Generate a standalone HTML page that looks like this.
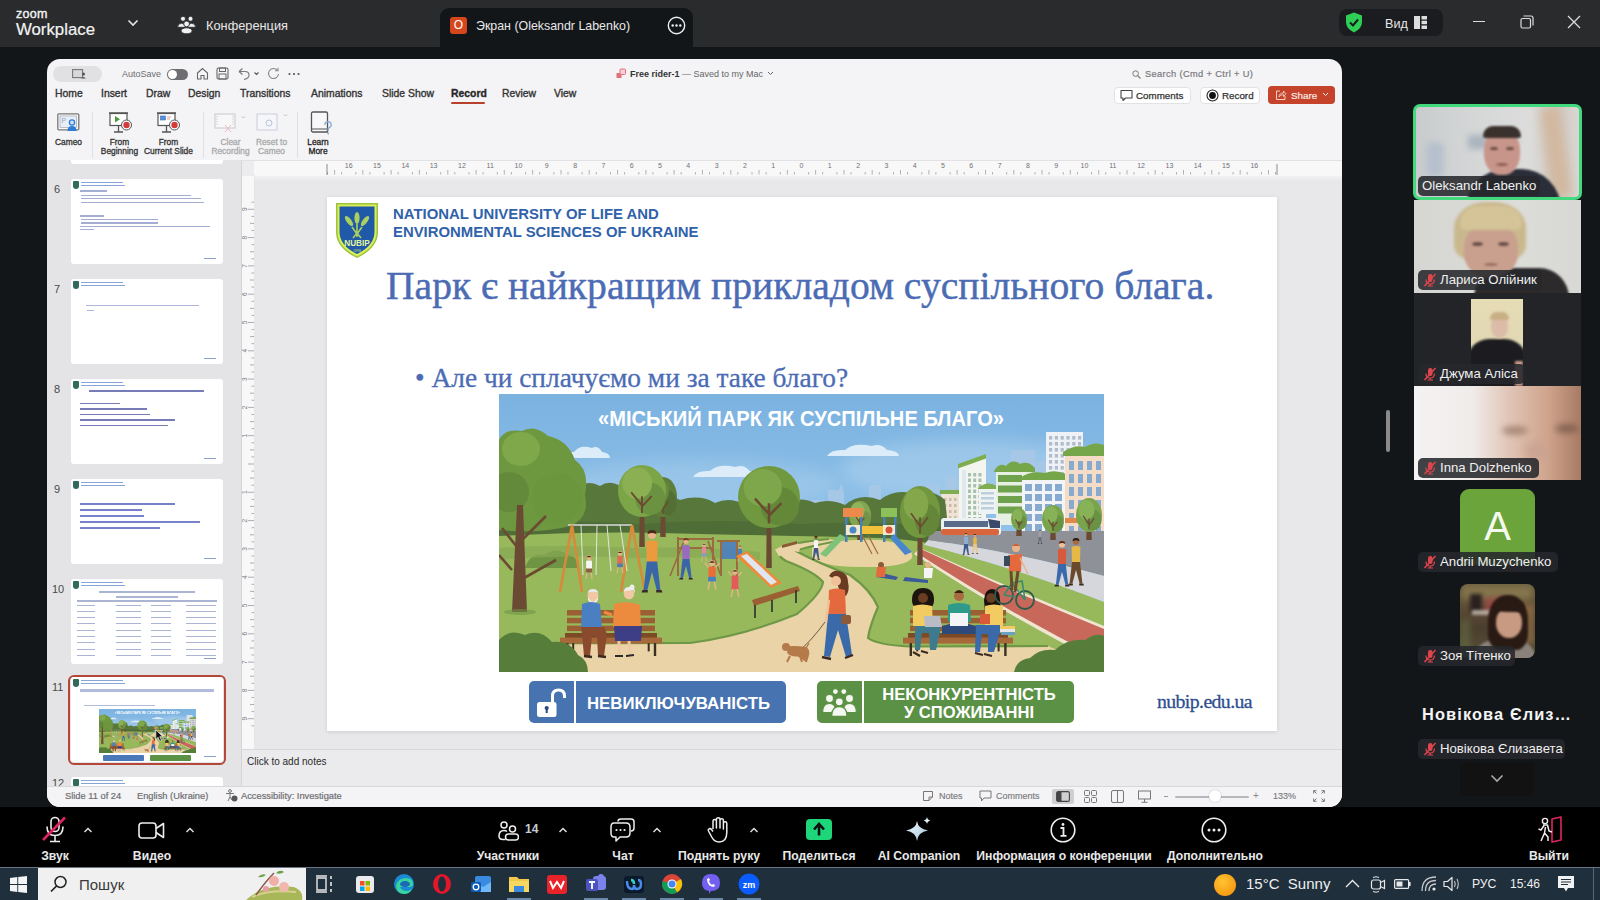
<!DOCTYPE html>
<html><head><meta charset="utf-8">
<style>
*{margin:0;padding:0;box-sizing:border-box}
html,body{width:1600px;height:900px;overflow:hidden;background:#131619;font-family:"Liberation Sans",sans-serif}
.a{position:absolute}
#topbar{left:0;top:0;width:1600px;height:47px;background:#2a2b2d}
#main{left:0;top:47px;width:1600px;height:760px;background:#131619}
#ppt{left:47px;top:59px;width:1295px;height:748px;background:#f4f4f6;border-radius:13px;overflow:hidden}
#toolbar{left:0;top:807px;width:1600px;height:60px;background:#000}
#taskbar{left:0;top:867px;width:1600px;height:33px;background:#1f2f3c}
.w{color:#fff}
.pt{white-space:nowrap;line-height:11px}
.tab{top:88px;font-size:10.4px;color:#333;line-height:12px;-webkit-text-stroke:0.35px #333}
.rb{font-size:8.4px;color:#333;text-align:center;line-height:9px;-webkit-text-stroke:0.3px currentColor}
</style></head><body>
<div id="topbar" class="a">
  <div class="a" style="left:16px;top:8px;color:#f2f2f2;font-size:12.5px;letter-spacing:0.3px;line-height:12px;-webkit-text-stroke:0.4px #f2f2f2">zoom</div>
  <div class="a" style="left:16px;top:20px;color:#f2f2f2;font-size:16.8px;line-height:20px;-webkit-text-stroke:0.2px #f2f2f2">Workplace</div>
  <svg class="a" style="left:127px;top:19px" width="12" height="8" viewBox="0 0 12 8"><path d="M1.5 1.5 L6 6 L10.5 1.5" stroke="#e6e6e6" stroke-width="1.6" fill="none"/></svg>
  <svg class="a" style="left:177px;top:15px" width="20" height="20" viewBox="0 0 20 20"><g fill="#f2f2f2" stroke="#2a2b2d" stroke-width="0.9"><circle cx="6" cy="3.8" r="2.5"/><circle cx="13.5" cy="3.8" r="2.5"/><path d="M0.6 12.3 Q0.6 8.3 4.6 8.3 Q8.6 8.3 8.6 12.3Z"/><path d="M10.6 12.3 Q10.6 8.3 14.6 8.3 Q18.6 8.3 18.6 12.3Z"/><circle cx="9.6" cy="8.9" r="2.9"/><ellipse cx="9.6" cy="15.8" rx="5.6" ry="3"/></g></svg>
  <div class="a" style="left:206px;top:18px;color:#e8e8e8;font-size:12.8px;line-height:16px">Конференция</div>
  <div class="a" style="left:440px;top:8px;width:253px;height:39px;background:#131619;border-radius:9px 9px 0 0"></div>
  <div class="a" style="left:450px;top:17px;width:17px;height:17px;background:#d6461c;border-radius:3px;color:#fff;font-size:12px;text-align:center;line-height:17px">O</div>
  <div class="a" style="left:476px;top:18px;color:#e8e8e8;font-size:12.4px;line-height:16px">Экран (Oleksandr Labenko)</div>
  <svg class="a" style="left:667px;top:16px" width="19" height="19" viewBox="0 0 19 19"><circle cx="9.5" cy="9.5" r="8.2" stroke="#eee" stroke-width="1.4" fill="none"/><circle cx="5.7" cy="9.5" r="1.2" fill="#eee"/><circle cx="9.5" cy="9.5" r="1.2" fill="#eee"/><circle cx="13.3" cy="9.5" r="1.2" fill="#eee"/></svg>
  <div class="a" style="left:1339px;top:9px;width:104px;height:27px;background:#1b1c1f;border-radius:8px"></div>
  <svg class="a" style="left:1345px;top:12px" width="18" height="21" viewBox="0 0 18 21"><path d="M9 0.5 L17 3.5 L17 10 Q17 16.5 9 20.5 Q1 16.5 1 10 L1 3.5Z" fill="#2fcf55"/><path d="M5 10.5 L8 13.5 L13 7.5" stroke="#1b1c1f" stroke-width="2" fill="none"/></svg>
  <div class="a" style="left:1385px;top:16px;color:#e8e8e8;font-size:12.6px;line-height:16px">Вид</div>
  <svg class="a" style="left:1414px;top:16px" width="13" height="13" viewBox="0 0 13 13"><rect x="0" y="0" width="6" height="13" fill="#ddd"/><rect x="7.5" y="0" width="5.5" height="3.5" fill="#ddd"/><rect x="7.5" y="4.7" width="5.5" height="3.5" fill="#ddd"/><rect x="7.5" y="9.5" width="5.5" height="3.5" fill="#ddd"/></svg>
  <div class="a" style="left:1473px;top:21px;width:12px;height:1.3px;background:#ddd"></div>
  <svg class="a" style="left:1520px;top:15px" width="14" height="14" viewBox="0 0 14 14"><rect x="1" y="3.5" width="9.5" height="9.5" rx="1.5" stroke="#ddd" stroke-width="1.2" fill="none"/><path d="M3.5 1 L11 1 Q13 1 13 3 L13 10.5" stroke="#ddd" stroke-width="1.2" fill="none"/></svg>
  <svg class="a" style="left:1567px;top:15px" width="14" height="14" viewBox="0 0 14 14"><path d="M1 1 L13 13 M13 1 L1 13" stroke="#ddd" stroke-width="1.3"/></svg>
</div>
<div id="main" class="a"></div>
<div id="ppt" class="a"><div class="a" style="left:-47px;top:-59px;width:1600px;height:900px">
  <div class="a" style="left:47px;top:160px;width:194px;height:626px;background:#e4e4e6"></div>
  <div class="a" style="left:241px;top:160px;width:1px;height:626px;background:#d4d4d6"></div>
  <div class="a" style="left:47px;top:160px;width:194px;height:626px;overflow:hidden"><div class="a" style="left:-47px;top:-160px;width:300px;height:1000px"><div class="a" style="left:71px;top:120px;width:152px;height:44px;background:#fff;border-radius:3px"></div><div class="a pt" style="left:54px;top:183px;font-size:11px;line-height:13px;color:#4a4a4a">6</div><div class="a" style="left:71px;top:179px;width:152px;height:85px;background:#fff;border-radius:3px;overflow:hidden"><div class="a" style="left:2px;top:1.5px;width:6px;height:8px;background:#2f6a5c;border-radius:1px 1px 3px 3px"></div><div class="a" style="left:10px;top:2.5px;width:42px;height:1.5px;background:#6a8ed0;opacity:0.8"></div><div class="a" style="left:10px;top:5.5px;width:44px;height:1.5px;background:#6a8ed0;opacity:0.8"></div><div class="a" style="left:133px;top:79px;width:12px;height:1.4px;background:#8aa0d0"></div><div class="a" style="left:9px;top:11.2px;width:27px;height:1.4px;background:#5a6ab0;opacity:0.55"></div><div class="a" style="left:10px;top:16px;width:110px;height:1.2px;background:#5a6ab0;opacity:0.55"></div><div class="a" style="left:10px;top:19.2px;width:120px;height:1.2px;background:#5a6ab0;opacity:0.55"></div><div class="a" style="left:10px;top:22.6px;width:123px;height:1.2px;background:#5a6ab0;opacity:0.55"></div><div class="a" style="left:9px;top:36.4px;width:24px;height:1.4px;background:#5a6ab0;opacity:0.55"></div><div class="a" style="left:10px;top:40px;width:77px;height:1.2px;background:#5a6ab0;opacity:0.55"></div><div class="a" style="left:10px;top:43.4px;width:77px;height:1.2px;background:#5a6ab0;opacity:0.55"></div><div class="a" style="left:9px;top:47px;width:130px;height:1.2px;background:#5a6ab0;opacity:0.55"></div><div class="a" style="left:9px;top:50.2px;width:14px;height:1.2px;background:#5a6ab0;opacity:0.55"></div></div><div class="a pt" style="left:54px;top:283px;font-size:11px;line-height:13px;color:#4a4a4a">7</div><div class="a" style="left:71px;top:279px;width:152px;height:85px;background:#fff;border-radius:3px;overflow:hidden"><div class="a" style="left:2px;top:1.5px;width:6px;height:8px;background:#2f6a5c;border-radius:1px 1px 3px 3px"></div><div class="a" style="left:10px;top:2.5px;width:42px;height:1.5px;background:#6a8ed0;opacity:0.8"></div><div class="a" style="left:10px;top:5.5px;width:44px;height:1.5px;background:#6a8ed0;opacity:0.8"></div><div class="a" style="left:133px;top:79px;width:12px;height:1.4px;background:#8aa0d0"></div><div class="a" style="left:15px;top:26px;width:113px;height:1.4px;background:#7078c0;opacity:0.55"></div><div class="a" style="left:16px;top:30.5px;width:7px;height:1.2px;background:#7078c0;opacity:0.55"></div></div><div class="a pt" style="left:54px;top:383px;font-size:11px;line-height:13px;color:#4a4a4a">8</div><div class="a" style="left:71px;top:379px;width:152px;height:85px;background:#fff;border-radius:3px;overflow:hidden"><div class="a" style="left:2px;top:1.5px;width:6px;height:8px;background:#2f6a5c;border-radius:1px 1px 3px 3px"></div><div class="a" style="left:10px;top:2.5px;width:42px;height:1.5px;background:#6a8ed0;opacity:0.8"></div><div class="a" style="left:10px;top:5.5px;width:44px;height:1.5px;background:#6a8ed0;opacity:0.8"></div><div class="a" style="left:133px;top:79px;width:12px;height:1.4px;background:#8aa0d0"></div><div class="a" style="left:18px;top:11px;width:115px;height:2.2px;background:#4a50a0;opacity:0.75"></div><div class="a" style="left:9.3px;top:23.5px;width:40px;height:1.5px;background:#4a50a0;opacity:0.75"></div><div class="a" style="left:9.3px;top:29px;width:67px;height:1.5px;background:#4a50a0;opacity:0.75"></div><div class="a" style="left:9.3px;top:34.5px;width:70px;height:1.5px;background:#4a50a0;opacity:0.75"></div><div class="a" style="left:9.3px;top:40px;width:95px;height:1.5px;background:#4a50a0;opacity:0.75"></div><div class="a" style="left:9.3px;top:45.5px;width:88px;height:1.5px;background:#4a50a0;opacity:0.75"></div></div><div class="a pt" style="left:54px;top:483px;font-size:11px;line-height:13px;color:#4a4a4a">9</div><div class="a" style="left:71px;top:479px;width:152px;height:85px;background:#fff;border-radius:3px;overflow:hidden"><div class="a" style="left:2px;top:1.5px;width:6px;height:8px;background:#2f6a5c;border-radius:1px 1px 3px 3px"></div><div class="a" style="left:10px;top:2.5px;width:42px;height:1.5px;background:#6a8ed0;opacity:0.8"></div><div class="a" style="left:10px;top:5.5px;width:44px;height:1.5px;background:#6a8ed0;opacity:0.8"></div><div class="a" style="left:133px;top:79px;width:12px;height:1.4px;background:#8aa0d0"></div><div class="a" style="left:8.7px;top:24px;width:95px;height:1.5px;background:#4a58b8;opacity:0.75"></div><div class="a" style="left:8.7px;top:30px;width:62px;height:1.5px;background:#4a58b8;opacity:0.75"></div><div class="a" style="left:8.7px;top:36px;width:64px;height:1.5px;background:#4a58b8;opacity:0.75"></div><div class="a" style="left:8.7px;top:42px;width:120px;height:1.5px;background:#4a58b8;opacity:0.75"></div><div class="a" style="left:8.7px;top:48px;width:80px;height:1.5px;background:#4a58b8;opacity:0.75"></div></div><div class="a pt" style="left:52px;top:583px;font-size:11px;line-height:13px;color:#4a4a4a">10</div><div class="a" style="left:71px;top:579px;width:152px;height:85px;background:#fff;border-radius:3px;overflow:hidden"><div class="a" style="left:2px;top:1.5px;width:6px;height:8px;background:#2f6a5c;border-radius:1px 1px 3px 3px"></div><div class="a" style="left:10px;top:2.5px;width:42px;height:1.5px;background:#6a8ed0;opacity:0.8"></div><div class="a" style="left:10px;top:5.5px;width:44px;height:1.5px;background:#6a8ed0;opacity:0.8"></div><div class="a" style="left:133px;top:79px;width:12px;height:1.4px;background:#8aa0d0"></div><div class="a" style="left:28px;top:12px;width:96px;height:2.2px;background:#5a6aa8;opacity:0.5"></div><div class="a" style="left:45px;top:16.5px;width:62px;height:2.2px;background:#5a6aa8;opacity:0.5"></div><div class="a" style="left:6px;top:21px;width:140px;height:1.6px;background:#5a6aa8;opacity:0.5"></div><div class="a" style="left:6px;top:25.5px;width:18px;height:1.1px;background:#5a6aa8;opacity:0.5"></div><div class="a" style="left:45px;top:25.5px;width:25px;height:1.1px;background:#5a6aa8;opacity:0.5"></div><div class="a" style="left:80px;top:25.5px;width:20px;height:1.1px;background:#5a6aa8;opacity:0.5"></div><div class="a" style="left:115px;top:25.5px;width:30px;height:1.1px;background:#5a6aa8;opacity:0.5"></div><div class="a" style="left:6px;top:31.8px;width:18px;height:1.1px;background:#5a6aa8;opacity:0.5"></div><div class="a" style="left:45px;top:31.8px;width:25px;height:1.1px;background:#5a6aa8;opacity:0.5"></div><div class="a" style="left:80px;top:31.8px;width:20px;height:1.1px;background:#5a6aa8;opacity:0.5"></div><div class="a" style="left:115px;top:31.8px;width:30px;height:1.1px;background:#5a6aa8;opacity:0.5"></div><div class="a" style="left:6px;top:38.1px;width:18px;height:1.1px;background:#5a6aa8;opacity:0.5"></div><div class="a" style="left:45px;top:38.1px;width:25px;height:1.1px;background:#5a6aa8;opacity:0.5"></div><div class="a" style="left:80px;top:38.1px;width:20px;height:1.1px;background:#5a6aa8;opacity:0.5"></div><div class="a" style="left:115px;top:38.1px;width:30px;height:1.1px;background:#5a6aa8;opacity:0.5"></div><div class="a" style="left:6px;top:44.4px;width:18px;height:1.1px;background:#5a6aa8;opacity:0.5"></div><div class="a" style="left:45px;top:44.4px;width:25px;height:1.1px;background:#5a6aa8;opacity:0.5"></div><div class="a" style="left:80px;top:44.4px;width:20px;height:1.1px;background:#5a6aa8;opacity:0.5"></div><div class="a" style="left:115px;top:44.4px;width:30px;height:1.1px;background:#5a6aa8;opacity:0.5"></div><div class="a" style="left:6px;top:50.7px;width:18px;height:1.1px;background:#5a6aa8;opacity:0.5"></div><div class="a" style="left:45px;top:50.7px;width:25px;height:1.1px;background:#5a6aa8;opacity:0.5"></div><div class="a" style="left:80px;top:50.7px;width:20px;height:1.1px;background:#5a6aa8;opacity:0.5"></div><div class="a" style="left:115px;top:50.7px;width:30px;height:1.1px;background:#5a6aa8;opacity:0.5"></div><div class="a" style="left:6px;top:57.0px;width:18px;height:1.1px;background:#5a6aa8;opacity:0.5"></div><div class="a" style="left:45px;top:57.0px;width:25px;height:1.1px;background:#5a6aa8;opacity:0.5"></div><div class="a" style="left:80px;top:57.0px;width:20px;height:1.1px;background:#5a6aa8;opacity:0.5"></div><div class="a" style="left:115px;top:57.0px;width:30px;height:1.1px;background:#5a6aa8;opacity:0.5"></div><div class="a" style="left:6px;top:63.3px;width:18px;height:1.1px;background:#5a6aa8;opacity:0.5"></div><div class="a" style="left:45px;top:63.3px;width:25px;height:1.1px;background:#5a6aa8;opacity:0.5"></div><div class="a" style="left:80px;top:63.3px;width:20px;height:1.1px;background:#5a6aa8;opacity:0.5"></div><div class="a" style="left:115px;top:63.3px;width:30px;height:1.1px;background:#5a6aa8;opacity:0.5"></div><div class="a" style="left:6px;top:69.6px;width:18px;height:1.1px;background:#5a6aa8;opacity:0.5"></div><div class="a" style="left:45px;top:69.6px;width:25px;height:1.1px;background:#5a6aa8;opacity:0.5"></div><div class="a" style="left:80px;top:69.6px;width:20px;height:1.1px;background:#5a6aa8;opacity:0.5"></div><div class="a" style="left:115px;top:69.6px;width:30px;height:1.1px;background:#5a6aa8;opacity:0.5"></div><div class="a" style="left:6px;top:75.9px;width:18px;height:1.1px;background:#5a6aa8;opacity:0.5"></div><div class="a" style="left:45px;top:75.9px;width:25px;height:1.1px;background:#5a6aa8;opacity:0.5"></div><div class="a" style="left:80px;top:75.9px;width:20px;height:1.1px;background:#5a6aa8;opacity:0.5"></div><div class="a" style="left:115px;top:75.9px;width:30px;height:1.1px;background:#5a6aa8;opacity:0.5"></div></div><div class="a pt" style="left:52px;top:681px;font-size:11px;line-height:13px;color:#4a4a4a">11</div><div class="a" style="left:68px;top:674.5px;width:158px;height:90px;border:2.5px solid #b5473a;border-radius:6px"></div><div class="a" style="left:71px;top:677px;width:152px;height:85px;background:#fff;border-radius:3px;overflow:hidden"><div class="a" style="left:2px;top:1.5px;width:6px;height:8px;background:#2f6a5c;border-radius:1px 1px 3px 3px"></div><div class="a" style="left:10px;top:2.5px;width:42px;height:1.5px;background:#6a8ed0;opacity:0.8"></div><div class="a" style="left:10px;top:5.5px;width:44px;height:1.5px;background:#6a8ed0;opacity:0.8"></div><div class="a" style="left:133px;top:79px;width:12px;height:1.4px;background:#8aa0d0"></div><div class="a" style="left:9px;top:12px;width:134px;height:3px;background:#7f8cc8;opacity:0.6"></div><div class="a" style="left:13px;top:27.5px;width:71px;height:1.6px;background:#7f8cc8;opacity:0.6"></div><div class="a" style="left:27.5px;top:31.5px;width:97px;height:44.5px;overflow:hidden"><div style="position:absolute;left:0;top:0;width:605px;height:278px;transform:scale(0.1603,0.1601);transform-origin:0 0"><svg width="605" height="278" viewBox="499 394 605 278"><use href="#illus-g"/></svg></div></div><div class="a" style="left:32px;top:77.5px;width:41px;height:6.7px;background:#4a78b8;border-radius:1px"></div><div class="a" style="left:78.5px;top:77.5px;width:41px;height:6.7px;background:#5b9145;border-radius:1px"></div></div><div class="a pt" style="left:52px;top:777px;font-size:11px;line-height:13px;color:#4a4a4a">12</div><div class="a" style="left:71px;top:777px;width:152px;height:85px;background:#fff;border-radius:3px;overflow:hidden"><div class="a" style="left:2px;top:1.5px;width:6px;height:8px;background:#2f6a5c;border-radius:1px 1px 3px 3px"></div><div class="a" style="left:10px;top:2.5px;width:42px;height:1.5px;background:#6a8ed0;opacity:0.8"></div><div class="a" style="left:10px;top:5.5px;width:44px;height:1.5px;background:#6a8ed0;opacity:0.8"></div><div class="a" style="left:133px;top:79px;width:12px;height:1.4px;background:#8aa0d0"></div></div></div></div>
  <div class="a" style="left:242px;top:160px;width:1100px;height:1px;background:#e2e2e4"></div>
  <svg class="a" style="left:155px;top:729px" width="9" height="13" viewBox="0 0 9 13"><path d="M0.8 0.8 L0.8 10.5 L3 8.3 L4.8 12.2 L6.5 11.4 L4.8 7.7 L7.8 7.7Z" fill="#111" stroke="#eee" stroke-width="0.7"/></svg>
  <div class="a" style="left:254px;top:161px;width:1088px;height:15px;background:#f8f8f9"></div>
  <div class="a" style="left:242px;top:161px;width:12px;height:15px;background:#ececee"></div>
  
  <div class="a" style="left:242px;top:176px;width:12px;height:573px;background:#f8f8f9"></div>
  <div class="a" style="left:254px;top:175px;width:1px;height:574px;background:#e6e6e8"></div>
  <div class="a" style="left:255px;top:176px;width:1087px;height:573px;background:#e8e8ea"></div><div class="a" style="left:255px;top:176px;width:1087px;height:5px;background:linear-gradient(#f2f2f3,#e8e8ea)"></div>
  <svg class="a" style="left:254px;top:161px" width="1088" height="15" viewBox="0 0 1088 15"><g stroke="#a0a0a4" stroke-width="0.8"><path d="M73.5 11.0 L73.5 13.5"/><path d="M80.6 9.0 L80.6 13.5"/><path d="M87.6 11.0 L87.6 13.5"/><path d="M101.8 11.0 L101.8 13.5"/><path d="M108.8 9.0 L108.8 13.5"/><path d="M115.9 11.0 L115.9 13.5"/><path d="M130.1 11.0 L130.1 13.5"/><path d="M137.1 9.0 L137.1 13.5"/><path d="M144.2 11.0 L144.2 13.5"/><path d="M158.4 11.0 L158.4 13.5"/><path d="M165.4 9.0 L165.4 13.5"/><path d="M172.5 11.0 L172.5 13.5"/><path d="M186.7 11.0 L186.7 13.5"/><path d="M193.8 9.0 L193.8 13.5"/><path d="M200.8 11.0 L200.8 13.5"/><path d="M215.0 11.0 L215.0 13.5"/><path d="M222.1 9.0 L222.1 13.5"/><path d="M229.1 11.0 L229.1 13.5"/><path d="M243.3 11.0 L243.3 13.5"/><path d="M250.3 9.0 L250.3 13.5"/><path d="M257.4 11.0 L257.4 13.5"/><path d="M271.6 11.0 L271.6 13.5"/><path d="M278.6 9.0 L278.6 13.5"/><path d="M285.7 11.0 L285.7 13.5"/><path d="M299.9 11.0 L299.9 13.5"/><path d="M307.0 9.0 L307.0 13.5"/><path d="M314.0 11.0 L314.0 13.5"/><path d="M328.2 11.0 L328.2 13.5"/><path d="M335.2 9.0 L335.2 13.5"/><path d="M342.3 11.0 L342.3 13.5"/><path d="M356.5 11.0 L356.5 13.5"/><path d="M363.5 9.0 L363.5 13.5"/><path d="M370.6 11.0 L370.6 13.5"/><path d="M384.8 11.0 L384.8 13.5"/><path d="M391.9 9.0 L391.9 13.5"/><path d="M398.9 11.0 L398.9 13.5"/><path d="M413.1 11.0 L413.1 13.5"/><path d="M420.1 9.0 L420.1 13.5"/><path d="M427.2 11.0 L427.2 13.5"/><path d="M441.4 11.0 L441.4 13.5"/><path d="M448.5 9.0 L448.5 13.5"/><path d="M455.5 11.0 L455.5 13.5"/><path d="M469.7 11.0 L469.7 13.5"/><path d="M476.8 9.0 L476.8 13.5"/><path d="M483.8 11.0 L483.8 13.5"/><path d="M498.0 11.0 L498.0 13.5"/><path d="M505.0 9.0 L505.0 13.5"/><path d="M512.1 11.0 L512.1 13.5"/><path d="M526.3 11.0 L526.3 13.5"/><path d="M533.4 9.0 L533.4 13.5"/><path d="M540.4 11.0 L540.4 13.5"/><path d="M554.6 11.0 L554.6 13.5"/><path d="M561.6 9.0 L561.6 13.5"/><path d="M568.7 11.0 L568.7 13.5"/><path d="M582.9 11.0 L582.9 13.5"/><path d="M590.0 9.0 L590.0 13.5"/><path d="M597.0 11.0 L597.0 13.5"/><path d="M611.2 11.0 L611.2 13.5"/><path d="M618.2 9.0 L618.2 13.5"/><path d="M625.3 11.0 L625.3 13.5"/><path d="M639.5 11.0 L639.5 13.5"/><path d="M646.5 9.0 L646.5 13.5"/><path d="M653.6 11.0 L653.6 13.5"/><path d="M667.8 11.0 L667.8 13.5"/><path d="M674.9 9.0 L674.9 13.5"/><path d="M681.9 11.0 L681.9 13.5"/><path d="M696.1 11.0 L696.1 13.5"/><path d="M703.1 9.0 L703.1 13.5"/><path d="M710.2 11.0 L710.2 13.5"/><path d="M724.4 11.0 L724.4 13.5"/><path d="M731.5 9.0 L731.5 13.5"/><path d="M738.5 11.0 L738.5 13.5"/><path d="M752.7 11.0 L752.7 13.5"/><path d="M759.8 9.0 L759.8 13.5"/><path d="M766.8 11.0 L766.8 13.5"/><path d="M781.0 11.0 L781.0 13.5"/><path d="M788.0 9.0 L788.0 13.5"/><path d="M795.1 11.0 L795.1 13.5"/><path d="M809.3 11.0 L809.3 13.5"/><path d="M816.3 9.0 L816.3 13.5"/><path d="M823.4 11.0 L823.4 13.5"/><path d="M837.6 11.0 L837.6 13.5"/><path d="M844.7 9.0 L844.7 13.5"/><path d="M851.7 11.0 L851.7 13.5"/><path d="M865.9 11.0 L865.9 13.5"/><path d="M873.0 9.0 L873.0 13.5"/><path d="M880.0 11.0 L880.0 13.5"/><path d="M894.2 11.0 L894.2 13.5"/><path d="M901.2 9.0 L901.2 13.5"/><path d="M908.3 11.0 L908.3 13.5"/><path d="M922.5 11.0 L922.5 13.5"/><path d="M929.5 9.0 L929.5 13.5"/><path d="M936.6 11.0 L936.6 13.5"/><path d="M950.8 11.0 L950.8 13.5"/><path d="M957.8 9.0 L957.8 13.5"/><path d="M964.9 11.0 L964.9 13.5"/><path d="M979.1 11.0 L979.1 13.5"/><path d="M986.2 9.0 L986.2 13.5"/><path d="M993.2 11.0 L993.2 13.5"/><path d="M1007.4 11.0 L1007.4 13.5"/><path d="M1014.5 9.0 L1014.5 13.5"/><path d="M1021.5 11.0 L1021.5 13.5"/></g><g font-size="7" fill="#707074" font-family="Liberation Sans"><text x="94.7" y="7" text-anchor="middle">16</text><text x="123.0" y="7" text-anchor="middle">15</text><text x="151.3" y="7" text-anchor="middle">14</text><text x="179.6" y="7" text-anchor="middle">13</text><text x="207.9" y="7" text-anchor="middle">12</text><text x="236.2" y="7" text-anchor="middle">11</text><text x="264.5" y="7" text-anchor="middle">10</text><text x="292.8" y="7" text-anchor="middle">9</text><text x="321.1" y="7" text-anchor="middle">8</text><text x="349.4" y="7" text-anchor="middle">7</text><text x="377.7" y="7" text-anchor="middle">6</text><text x="406.0" y="7" text-anchor="middle">5</text><text x="434.3" y="7" text-anchor="middle">4</text><text x="462.6" y="7" text-anchor="middle">3</text><text x="490.9" y="7" text-anchor="middle">2</text><text x="519.2" y="7" text-anchor="middle">1</text><text x="547.5" y="7" text-anchor="middle">0</text><text x="575.8" y="7" text-anchor="middle">1</text><text x="604.1" y="7" text-anchor="middle">2</text><text x="632.4" y="7" text-anchor="middle">3</text><text x="660.7" y="7" text-anchor="middle">4</text><text x="689.0" y="7" text-anchor="middle">5</text><text x="717.3" y="7" text-anchor="middle">6</text><text x="745.6" y="7" text-anchor="middle">7</text><text x="773.9" y="7" text-anchor="middle">8</text><text x="802.2" y="7" text-anchor="middle">9</text><text x="830.5" y="7" text-anchor="middle">10</text><text x="858.8" y="7" text-anchor="middle">11</text><text x="887.1" y="7" text-anchor="middle">12</text><text x="915.4" y="7" text-anchor="middle">13</text><text x="943.7" y="7" text-anchor="middle">14</text><text x="972.0" y="7" text-anchor="middle">15</text><text x="1000.3" y="7" text-anchor="middle">16</text></g><path d="M73 3 L73 14 M1023 3 L1023 14" stroke="#808084" stroke-width="0.9"/></svg>
  <svg class="a" style="left:242px;top:175px" width="12" height="574" viewBox="0 0 12 574"><g stroke="#9a9a9e" stroke-width="0.8"><path d="M9.5 27.2 L12 27.2" /><path d="M6 34.3 L12 34.3" /><path d="M9.5 41.4 L12 41.4" /><path d="M8 48.4 L12 48.4" /><path d="M9.5 55.5 L12 55.5" /><path d="M6 62.6 L12 62.6" /><path d="M9.5 69.7 L12 69.7" /><path d="M8 76.8 L12 76.8" /><path d="M9.5 83.8 L12 83.8" /><path d="M6 90.9 L12 90.9" /><path d="M9.5 98.0 L12 98.0" /><path d="M8 105.0 L12 105.0" /><path d="M9.5 112.1 L12 112.1" /><path d="M6 119.2 L12 119.2" /><path d="M9.5 126.3 L12 126.3" /><path d="M8 133.4 L12 133.4" /><path d="M9.5 140.4 L12 140.4" /><path d="M6 147.5 L12 147.5" /><path d="M9.5 154.6 L12 154.6" /><path d="M8 161.6 L12 161.6" /><path d="M9.5 168.7 L12 168.7" /><path d="M6 175.8 L12 175.8" /><path d="M9.5 182.9 L12 182.9" /><path d="M8 189.9 L12 189.9" /><path d="M9.5 197.0 L12 197.0" /><path d="M6 204.1 L12 204.1" /><path d="M9.5 211.2 L12 211.2" /><path d="M8 218.2 L12 218.2" /><path d="M9.5 225.3 L12 225.3" /><path d="M6 232.4 L12 232.4" /><path d="M9.5 239.5 L12 239.5" /><path d="M8 246.6 L12 246.6" /><path d="M9.5 253.6 L12 253.6" /><path d="M6 260.7 L12 260.7" /><path d="M9.5 267.8 L12 267.8" /><path d="M8 274.9 L12 274.9" /><path d="M9.5 281.9 L12 281.9" /><path d="M6 289.0 L12 289.0" /><path d="M9.5 296.1 L12 296.1" /><path d="M8 303.1 L12 303.1" /><path d="M9.5 310.2 L12 310.2" /><path d="M6 317.3 L12 317.3" /><path d="M9.5 324.4 L12 324.4" /><path d="M8 331.4 L12 331.4" /><path d="M9.5 338.5 L12 338.5" /><path d="M6 345.6 L12 345.6" /><path d="M9.5 352.7 L12 352.7" /><path d="M8 359.8 L12 359.8" /><path d="M9.5 366.8 L12 366.8" /><path d="M6 373.9 L12 373.9" /><path d="M9.5 381.0 L12 381.0" /><path d="M8 388.0 L12 388.0" /><path d="M9.5 395.1 L12 395.1" /><path d="M6 402.2 L12 402.2" /><path d="M9.5 409.3 L12 409.3" /><path d="M8 416.4 L12 416.4" /><path d="M9.5 423.4 L12 423.4" /><path d="M6 430.5 L12 430.5" /><path d="M9.5 437.6 L12 437.6" /><path d="M8 444.6 L12 444.6" /><path d="M9.5 451.7 L12 451.7" /><path d="M6 458.8 L12 458.8" /><path d="M9.5 465.9 L12 465.9" /><path d="M8 473.0 L12 473.0" /><path d="M9.5 480.0 L12 480.0" /><path d="M6 487.1 L12 487.1" /><path d="M9.5 494.2 L12 494.2" /><path d="M8 501.2 L12 501.2" /><path d="M9.5 508.3 L12 508.3" /><path d="M6 515.4 L12 515.4" /><path d="M9.5 522.5 L12 522.5" /><path d="M8 529.5 L12 529.5" /><path d="M9.5 536.6 L12 536.6" /><path d="M6 543.7 L12 543.7" /><path d="M9.5 550.8 L12 550.8" /></g><g font-size="6.5" fill="#777" font-family="Liberation Sans"><text x="0" y="0" transform="translate(4.5 260.7) rotate(-90)" text-anchor="middle">1</text><text x="0" y="0" transform="translate(4.5 317.3) rotate(-90)" text-anchor="middle">1</text><text x="0" y="0" transform="translate(4.5 232.4) rotate(-90)" text-anchor="middle">2</text><text x="0" y="0" transform="translate(4.5 345.6) rotate(-90)" text-anchor="middle">2</text><text x="0" y="0" transform="translate(4.5 204.1) rotate(-90)" text-anchor="middle">3</text><text x="0" y="0" transform="translate(4.5 373.9) rotate(-90)" text-anchor="middle">3</text><text x="0" y="0" transform="translate(4.5 175.8) rotate(-90)" text-anchor="middle">4</text><text x="0" y="0" transform="translate(4.5 402.2) rotate(-90)" text-anchor="middle">4</text><text x="0" y="0" transform="translate(4.5 147.5) rotate(-90)" text-anchor="middle">5</text><text x="0" y="0" transform="translate(4.5 430.5) rotate(-90)" text-anchor="middle">5</text><text x="0" y="0" transform="translate(4.5 119.2) rotate(-90)" text-anchor="middle">6</text><text x="0" y="0" transform="translate(4.5 458.8) rotate(-90)" text-anchor="middle">6</text><text x="0" y="0" transform="translate(4.5 90.9) rotate(-90)" text-anchor="middle">7</text><text x="0" y="0" transform="translate(4.5 487.1) rotate(-90)" text-anchor="middle">7</text><text x="0" y="0" transform="translate(4.5 62.6) rotate(-90)" text-anchor="middle">8</text><text x="0" y="0" transform="translate(4.5 515.4) rotate(-90)" text-anchor="middle">8</text><text x="0" y="0" transform="translate(4.5 34.3) rotate(-90)" text-anchor="middle">9</text><text x="0" y="0" transform="translate(4.5 543.7) rotate(-90)" text-anchor="middle">9</text></g></svg>
  <div class="a" style="left:327px;top:197px;width:950px;height:534px;background:#fff;box-shadow:0 1px 4px rgba(0,0,0,0.12)"></div>
  <svg class="a" style="left:335px;top:202px" width="44" height="57" viewBox="0 0 44 57"><path d="M1 1 L43 1 L43 30 Q43 46 22 56 Q1 46 1 30Z" fill="#9cc33a"/><path d="M2.5 2.5 L41.5 2.5 L41.5 30 Q41.5 45 22 54.5 Q2.5 45 2.5 30Z" fill="#d6ef5a"/><path d="M4.5 4.5 L39.5 4.5 L39.5 30 Q39.5 43.5 22 52 Q4.5 43.5 4.5 30Z" fill="#2059a8"/><g fill="#a9d060"><ellipse cx="22" cy="16" rx="2.6" ry="6"/><ellipse cx="14" cy="19" rx="2.4" ry="6" transform="rotate(-38 14 19)"/><ellipse cx="30" cy="19" rx="2.4" ry="6" transform="rotate(38 30 19)"/></g><path d="M22 22 L22 35 M17 25 L22 32 M27 25 L22 32 M18 36 L22 31 L26 36" stroke="#a9d060" stroke-width="1.6" fill="none"/><text x="22" y="44" font-size="8.2" font-weight="bold" fill="#e6f59a" text-anchor="middle" font-family="Liberation Sans">NUBIP</text><text x="22" y="49.5" font-size="3.5" fill="#c0dd70" text-anchor="middle" font-family="Liberation Sans">1898</text></svg>
  <div class="a pt" style="left:393px;top:206px;font-size:14.9px;line-height:17.5px;font-weight:bold;color:#2f62aa">NATIONAL UNIVERSITY OF LIFE AND<br>ENVIRONMENTAL SCIENCES OF UKRAINE</div>
  <div id="title" class="a pt" style="left:386px;top:264px;font-family:'Liberation Serif',serif;font-size:39.6px;line-height:44px;color:#4b6cb4;-webkit-text-stroke:0.45px #4b6cb4">Парк є найкращим прикладом суспільного блага.</div>
  <div id="bullet" class="a pt" style="left:415px;top:363px;font-family:'Liberation Serif',serif;font-size:27.4px;line-height:30px;color:#4b6cb4;-webkit-text-stroke:0.3px #4b6cb4">• Але чи сплачуємо ми за таке благо?</div>
  <div class="a" style="left:529px;top:681px;width:257px;height:42px;background:#4774b0;border-radius:5px"></div>
  <div class="a" style="left:574px;top:681px;width:1.5px;height:42px;background:#fff"></div>
  <svg class="a" style="left:536px;top:687px" width="32" height="32" viewBox="0 0 32 32"><path d="M16.5 15 L16.5 9 Q16.5 3 22.5 3 Q28.5 3 28.5 9 L28.5 11" stroke="#fff" stroke-width="3" fill="none"/><rect x="1" y="15" width="19.5" height="15" rx="2.5" fill="#fff"/><circle cx="10.7" cy="21" r="2.1" fill="#2a4a80"/><rect x="9.7" y="21" width="2" height="5" fill="#2a4a80"/></svg>
  <div id="btn1" class="a pt" style="left:587px;top:695px;font-size:16.8px;line-height:18px;font-weight:bold;color:#fff">НЕВИКЛЮЧУВАНІСТЬ</div>
  <div class="a" style="left:817px;top:681px;width:257px;height:42px;background:#5b9145;border-radius:5px"></div>
  <div class="a" style="left:862px;top:681px;width:1.5px;height:42px;background:#fff"></div>
  <svg class="a" style="left:822px;top:688px" width="36" height="30" viewBox="0 0 36 30"><g fill="#f4f8f0" stroke="#5b9145" stroke-width="1.1"><circle cx="13.4" cy="3.6" r="3"/><circle cx="21.8" cy="3.6" r="3"/><path d="M0.8 24.5 Q0.5 15.5 7.5 15.5 Q14 15.5 14 24.5Z"/><path d="M21 24.5 Q21 15.5 27.5 15.5 Q34.5 15.5 34.2 24.5Z"/><circle cx="7.5" cy="10.5" r="4"/><circle cx="27.5" cy="10.5" r="4"/><path d="M9.5 28.5 Q9.5 18.5 17.3 18.5 Q25.1 18.5 25.1 28.5Z" stroke-width="1.4"/><circle cx="17.3" cy="13.8" r="4.1" stroke-width="1.4"/></g></svg>
  <div id="btn2" class="a pt" style="left:864px;top:686px;width:210px;text-align:center;font-size:16.6px;line-height:17.5px;font-weight:bold;color:#fff">НЕКОНКУРЕНТНІСТЬ<br>У СПОЖИВАННІ</div>
  <div id="nub" class="a pt" style="left:1157px;top:690px;letter-spacing:-0.6px;font-family:'Liberation Serif',serif;font-size:19.8px;line-height:22px;color:#2e4f90;-webkit-text-stroke:0.3px #2e4f90">nubip.edu.ua</div>
  <!--ILLUS--><svg class="a" style="left:499px;top:394px" width="605" height="278" viewBox="499 394 605 278"><defs><linearGradient id="sky" x1="0" y1="0" x2="0" y2="1"><stop offset="0" stop-color="#7bb2e0"/><stop offset="0.45" stop-color="#8ec0e8"/><stop offset="1" stop-color="#c0ddf2"/></linearGradient><filter id="bl" x="-20%" y="-50%" width="140%" height="200%"><feGaussianBlur stdDeviation="8"/></filter></defs><g id="illus-g"><rect x="499" y="394" width="605" height="278" fill="url(#sky)"/><ellipse cx="970" cy="470" rx="130" ry="30" fill="#b8d8f0" opacity="0.45" filter="url(#bl)"/><ellipse cx="700" cy="485" rx="140" ry="25" fill="#b0d2ee" opacity="0.4" filter="url(#bl)"/><path d="M562.0 458 Q566.0 451 574.0 452 Q580.0 444 592.0 448 Q598.0 445 602.0 452 Q610.0 453 610.0 458Z" fill="#dcecf8"/><path d="M693.0 477 Q697.0 470 710.0 471 Q718.5 463 735.5 467 Q744.0 464 749.6666666666666 471 Q761.0 472 761.0 477Z" fill="#dcecf8"/><path d="M827.0 456 Q831.0 449 845.0 450 Q854.0 442 872.0 446 Q881.0 443 887.0 450 Q899.0 451 899.0 456Z" fill="#dcecf8"/><g fill="#a6c8e6"><rect x="810" y="500" width="14" height="30"/><rect x="828" y="490" width="10" height="40"/><path d="M838 492 L841 484 L844 492 L844 530 L838 530Z"/><rect x="869" y="485" width="12" height="45"/><rect x="926" y="485" width="13" height="45"/><rect x="946" y="477" width="10" height="50"/><rect x="1011" y="450" width="24" height="40"/><rect x="1035" y="462" width="12" height="30"/></g><rect x="1046" y="432" width="37" height="62" fill="#eef2f6"/><g fill="#b0bccb"><rect x="1049.0" y="436" width="3.2" height="3.6"/><rect x="1049.0" y="442" width="3.2" height="3.6"/><rect x="1049.0" y="448" width="3.2" height="3.6"/><rect x="1049.0" y="454" width="3.2" height="3.6"/><rect x="1049.0" y="460" width="3.2" height="3.6"/><rect x="1049.0" y="466" width="3.2" height="3.6"/><rect x="1049.0" y="472" width="3.2" height="3.6"/><rect x="1049.0" y="478" width="3.2" height="3.6"/><rect x="1054.8" y="436" width="3.2" height="3.6"/><rect x="1054.8" y="442" width="3.2" height="3.6"/><rect x="1054.8" y="448" width="3.2" height="3.6"/><rect x="1054.8" y="454" width="3.2" height="3.6"/><rect x="1054.8" y="460" width="3.2" height="3.6"/><rect x="1054.8" y="466" width="3.2" height="3.6"/><rect x="1054.8" y="472" width="3.2" height="3.6"/><rect x="1054.8" y="478" width="3.2" height="3.6"/><rect x="1060.6" y="436" width="3.2" height="3.6"/><rect x="1060.6" y="442" width="3.2" height="3.6"/><rect x="1060.6" y="448" width="3.2" height="3.6"/><rect x="1060.6" y="454" width="3.2" height="3.6"/><rect x="1060.6" y="460" width="3.2" height="3.6"/><rect x="1060.6" y="466" width="3.2" height="3.6"/><rect x="1060.6" y="472" width="3.2" height="3.6"/><rect x="1060.6" y="478" width="3.2" height="3.6"/><rect x="1066.4" y="436" width="3.2" height="3.6"/><rect x="1066.4" y="442" width="3.2" height="3.6"/><rect x="1066.4" y="448" width="3.2" height="3.6"/><rect x="1066.4" y="454" width="3.2" height="3.6"/><rect x="1066.4" y="460" width="3.2" height="3.6"/><rect x="1066.4" y="466" width="3.2" height="3.6"/><rect x="1066.4" y="472" width="3.2" height="3.6"/><rect x="1066.4" y="478" width="3.2" height="3.6"/><rect x="1072.2" y="436" width="3.2" height="3.6"/><rect x="1072.2" y="442" width="3.2" height="3.6"/><rect x="1072.2" y="448" width="3.2" height="3.6"/><rect x="1072.2" y="454" width="3.2" height="3.6"/><rect x="1072.2" y="460" width="3.2" height="3.6"/><rect x="1072.2" y="466" width="3.2" height="3.6"/><rect x="1072.2" y="472" width="3.2" height="3.6"/><rect x="1072.2" y="478" width="3.2" height="3.6"/><rect x="1078.0" y="436" width="3.2" height="3.6"/><rect x="1078.0" y="442" width="3.2" height="3.6"/><rect x="1078.0" y="448" width="3.2" height="3.6"/><rect x="1078.0" y="454" width="3.2" height="3.6"/><rect x="1078.0" y="460" width="3.2" height="3.6"/><rect x="1078.0" y="466" width="3.2" height="3.6"/><rect x="1078.0" y="472" width="3.2" height="3.6"/><rect x="1078.0" y="478" width="3.2" height="3.6"/></g><rect x="941" y="493" width="18" height="34" fill="#efe3d6"/><rect x="940" y="490" width="20" height="4" fill="#80ad50"/><g fill="#cbbba9"><rect x="944" y="498" width="2.5" height="3"/><rect x="944" y="504" width="2.5" height="3"/><rect x="944" y="510" width="2.5" height="3"/><rect x="944" y="516" width="2.5" height="3"/><rect x="949" y="498" width="2.5" height="3"/><rect x="949" y="504" width="2.5" height="3"/><rect x="949" y="510" width="2.5" height="3"/><rect x="949" y="516" width="2.5" height="3"/><rect x="954" y="498" width="2.5" height="3"/><rect x="954" y="504" width="2.5" height="3"/><rect x="954" y="510" width="2.5" height="3"/><rect x="954" y="516" width="2.5" height="3"/></g><path d="M959 467 L986 457 L986 525 L959 525Z" fill="#f3f6ef"/><path d="M958 464 L986 454 L986 458.5 L958 468.5Z" fill="#7fae50"/><rect x="962" y="470" width="4" height="55" fill="#dfe8ee"/><g fill="#a8c0b0"><rect x="968.0" y="473.0" width="3" height="3.5"/><rect x="968.0" y="478.5" width="3" height="3.5"/><rect x="968.0" y="484.0" width="3" height="3.5"/><rect x="968.0" y="489.5" width="3" height="3.5"/><rect x="968.0" y="495.0" width="3" height="3.5"/><rect x="968.0" y="500.5" width="3" height="3.5"/><rect x="968.0" y="506.0" width="3" height="3.5"/><rect x="968.0" y="511.5" width="3" height="3.5"/><rect x="968.0" y="517.0" width="3" height="3.5"/><rect x="973.2" y="473.0" width="3" height="3.5"/><rect x="973.2" y="478.5" width="3" height="3.5"/><rect x="973.2" y="484.0" width="3" height="3.5"/><rect x="973.2" y="489.5" width="3" height="3.5"/><rect x="973.2" y="495.0" width="3" height="3.5"/><rect x="973.2" y="500.5" width="3" height="3.5"/><rect x="973.2" y="506.0" width="3" height="3.5"/><rect x="973.2" y="511.5" width="3" height="3.5"/><rect x="973.2" y="517.0" width="3" height="3.5"/><rect x="978.4" y="473.0" width="3" height="3.5"/><rect x="978.4" y="478.5" width="3" height="3.5"/><rect x="978.4" y="484.0" width="3" height="3.5"/><rect x="978.4" y="489.5" width="3" height="3.5"/><rect x="978.4" y="495.0" width="3" height="3.5"/><rect x="978.4" y="500.5" width="3" height="3.5"/><rect x="978.4" y="506.0" width="3" height="3.5"/><rect x="978.4" y="511.5" width="3" height="3.5"/><rect x="978.4" y="517.0" width="3" height="3.5"/></g><rect x="979" y="487" width="17" height="27" fill="#f0f3f4"/><path d="M978 488 Q987 480 997 486 L997 489 L978 489Z" fill="#7fae50"/><g fill="#bcd0dc"><rect x="981" y="492" width="13" height="2.5"/><rect x="981" y="497" width="13" height="2.5"/><rect x="981" y="502" width="13" height="2.5"/><rect x="981" y="507" width="13" height="2.5"/></g><rect x="996" y="470" width="37" height="55" fill="#e8f0e4"/><path d="M994 471 Q999 462 1006 466 Q1012 458 1020 464 Q1028 460 1035 468 L1035 472 L994 472Z" fill="#76a64a"/><g fill="#6ea24c"><rect x="998" y="475.0" width="24" height="7"/><rect x="998" y="485.5" width="24" height="7"/><rect x="998" y="496.0" width="24" height="7"/><rect x="998" y="506.5" width="24" height="7"/></g><rect x="1022" y="478" width="44" height="60" fill="#f2f4f7"/><path d="M1020 478 Q1030 470 1045 473 Q1055 469 1066 474 L1066 480 L1020 480Z" fill="#76a64a"/><g fill="#86aad0"><rect x="1025" y="484" width="7" height="7"/><rect x="1025" y="494" width="7" height="7"/><rect x="1025" y="504" width="7" height="7"/><rect x="1025" y="514" width="7" height="7"/><rect x="1025" y="524" width="7" height="7"/><rect x="1035" y="484" width="7" height="7"/><rect x="1035" y="494" width="7" height="7"/><rect x="1035" y="504" width="7" height="7"/><rect x="1035" y="514" width="7" height="7"/><rect x="1035" y="524" width="7" height="7"/><rect x="1045" y="484" width="7" height="7"/><rect x="1045" y="494" width="7" height="7"/><rect x="1045" y="504" width="7" height="7"/><rect x="1045" y="514" width="7" height="7"/><rect x="1045" y="524" width="7" height="7"/><rect x="1055" y="484" width="7" height="7"/><rect x="1055" y="494" width="7" height="7"/><rect x="1055" y="504" width="7" height="7"/><rect x="1055" y="514" width="7" height="7"/><rect x="1055" y="524" width="7" height="7"/></g><rect x="1065" y="452" width="39" height="88" fill="#f4dcc6"/><path d="M1063 452 Q1075 444 1085 447 Q1095 441 1104 445 L1104 456 L1063 456Z" fill="#76a64a"/><g fill="#86aad0"><rect x="1069" y="461" width="5" height="9"/><rect x="1069" y="474" width="5" height="9"/><rect x="1069" y="487" width="5" height="9"/><rect x="1069" y="500" width="5" height="9"/><rect x="1069" y="513" width="5" height="9"/><rect x="1069" y="526" width="5" height="9"/><rect x="1078" y="461" width="5" height="9"/><rect x="1078" y="474" width="5" height="9"/><rect x="1078" y="487" width="5" height="9"/><rect x="1078" y="500" width="5" height="9"/><rect x="1078" y="513" width="5" height="9"/><rect x="1078" y="526" width="5" height="9"/><rect x="1087" y="461" width="5" height="9"/><rect x="1087" y="474" width="5" height="9"/><rect x="1087" y="487" width="5" height="9"/><rect x="1087" y="500" width="5" height="9"/><rect x="1087" y="513" width="5" height="9"/><rect x="1087" y="526" width="5" height="9"/><rect x="1096" y="461" width="5" height="9"/><rect x="1096" y="474" width="5" height="9"/><rect x="1096" y="487" width="5" height="9"/><rect x="1096" y="500" width="5" height="9"/><rect x="1096" y="513" width="5" height="9"/><rect x="1096" y="526" width="5" height="9"/></g><rect x="1065" y="518" width="20" height="5" fill="#e0874a"/><path d="M575 540 L575 492 Q585 478 600 486 Q612 478 625 490 Q640 494 650 500 Q665 492 680 500 Q700 494 715 503 Q730 496 745 505 Q760 500 780 505 Q800 495 815 503 Q830 498 845 505 Q860 492 880 500 Q895 488 915 494 Q932 488 945 500 L950 545 Z" fill="#58773b"/><path d="M499 528 Q560 518 640 524 Q720 518 800 524 Q880 520 950 528 L950 548 L499 548Z" fill="#4f6e37"/><path d="M499 536 Q600 530 700 534 Q800 536 880 538 Q920 540 940 546 L1104 626 L1104 672 L499 672Z" fill="#98b85c"/><path d="M525 568 Q530 552 545 555 Q555 546 568 555 Q578 556 578 568Z" fill="#6e9444"/><path d="M499 548 Q560 544 640 548 Q700 546 760 552 L760 560 Q700 556 640 558 Q560 554 499 560Z" fill="#86a852" opacity="0.7"/><path d="M930 531 L1104 531 L1104 576 Q1010 551 928 540Z" fill="#8f9199"/><path d="M928 540 Q1010 551 1104 576 L1104 602 Q1010 566 924 545Z" fill="#d6d7dd"/><rect x="941" y="518" width="60" height="17" rx="3" fill="#eef0f4"/><rect x="941" y="529" width="58" height="6" rx="2" fill="#d9663a"/><rect x="944" y="521" width="44" height="6" fill="#5a6b8a"/><path d="M988 519 L1000 521 L1000 528 L990 528Z" fill="#3a4a6a"/><path d="M1051.0 519.0 L1055.0 519.0 L1055.8 540.0 L1050.2 540.0Z" fill="#6b4a33"/><ellipse cx="1053.0" cy="519.0" rx="11.0" ry="14.0" fill="#7aa44c"/><ellipse cx="1056.8" cy="523.2" rx="6.8" ry="8.7" fill="#6a9244"/><ellipse cx="1050.8" cy="514.8" rx="6.8" ry="8.4" fill="#88b258"/><path d="M1053.0 530.9 L1053.0 521.8 M1053.0 526.7 L1048.0 519.7 M1053.0 527.4 L1057.4 521.8" stroke="#6b4a33" stroke-width="1.2" fill="none"/><path d="M1087.0 515.0 L1091.0 515.0 L1091.8 540.0 L1086.2 540.0Z" fill="#6b4a33"/><ellipse cx="1089.0" cy="515.0" rx="13.0" ry="17.0" fill="#7aa44c"/><ellipse cx="1093.5" cy="520.1" rx="8.1" ry="10.5" fill="#6a9244"/><ellipse cx="1086.4" cy="509.9" rx="8.1" ry="10.2" fill="#88b258"/><path d="M1089.0 529.5 L1089.0 518.4 M1089.0 524.4 L1083.2 515.9 M1089.0 525.2 L1094.2 518.4" stroke="#6b4a33" stroke-width="1.2" fill="none"/><path d="M1017.0 519.0 L1021.0 519.0 L1021.8 536.0 L1016.2 536.0Z" fill="#6b4a33"/><ellipse cx="1019.0" cy="519.0" rx="8.0" ry="11.0" fill="#7aa44c"/><ellipse cx="1021.8" cy="522.3" rx="5.0" ry="6.8" fill="#6a9244"/><ellipse cx="1017.4" cy="515.7" rx="5.0" ry="6.6" fill="#88b258"/><path d="M1019.0 528.4 L1019.0 521.2 M1019.0 525.0 L1015.4 519.5 M1019.0 525.6 L1022.2 521.2" stroke="#6b4a33" stroke-width="1.2" fill="none"/><path d="M924 545 Q1010 566 1104 602 L1104 626 Q1010 590 922 548Z" fill="#98b85c"/><path d="M920 548 Q1010 588 1104 626 L1104 664 Q1010 618 914 554Z" fill="#efe6d2"/><path d="M922 549.5 Q1010 591 1104 629 L1104 660 Q1010 614 917 553Z" fill="#c8685a"/><path d="M812 548 Q835 538 880 540 Q915 544 912 558 Q905 568 860 567 Q820 567 812 556Z" fill="#e9d3a3"/><path d="M499 644 L690 643 Q743 636 797 614 Q822 593 823 582 Q815 572 786 561 Q772 553 784 546 Q805 541 829 539 L838 541 Q805 547 796 551 Q818 563 850 575 Q871 590 878 607 Q870 625 868 638 Q877 645 910 646.5 L1048 646 L1104 672 L499 672Z" fill="#ead3a6"/><path d="M690 643 Q743 636 797 614 Q822 593 823 582 Q815 572 786 561 Q772 553 784 546 Q805 541 829 539" stroke="#6e9846" stroke-width="2.2" fill="none"/><path d="M838 541 Q805 547 796 551 Q818 563 850 575 Q871 590 878 607 Q870 625 868 638 Q877 645 910 646.5 L1048 646" stroke="#6e9846" stroke-width="2.2" fill="none"/><path d="M499 643.5 L690 643" stroke="#6e9846" stroke-width="2" fill="none"/><path d="M777 553 Q790 546 800 548" stroke="#ead3a6" stroke-width="8" fill="none"/><path d="M918.0 512.0 L922.0 512.0 L922.8 565.0 L917.2 565.0Z" fill="#6b4a33"/><ellipse cx="920.0" cy="512.0" rx="20.0" ry="26.0" fill="#72983f"/><ellipse cx="927.0" cy="519.8" rx="12.4" ry="16.1" fill="#638638"/><ellipse cx="916.0" cy="504.2" rx="12.4" ry="15.6" fill="#84a74c"/><path d="M920.0 534.1 L920.0 517.2 M920.0 526.3 L911.0 513.3 M920.0 527.6 L928.0 517.2" stroke="#6b4a33" stroke-width="1.6" fill="none"/><path d="M661.0 497.0 L665.0 497.0 L665.8 537.0 L660.2 537.0Z" fill="#6b4a33"/><ellipse cx="663.0" cy="497.0" rx="14.0" ry="20.0" fill="#5e7e3a"/><ellipse cx="667.9" cy="503.0" rx="8.7" ry="12.4" fill="#536f34"/><ellipse cx="660.2" cy="491.0" rx="8.7" ry="12.0" fill="#6a8a42"/><path d="M663.0 514.0 L663.0 501.0 M663.0 508.0 L656.7 498.0 M663.0 509.0 L668.6 501.0" stroke="#6b4a33" stroke-width="1.3" fill="none"/><path d="M640.0 491.0 L644.0 491.0 L644.8 547.0 L639.2 547.0Z" fill="#6b4a33"/><ellipse cx="642.0" cy="491.0" rx="24.0" ry="26.0" fill="#7ca548"/><ellipse cx="650.4" cy="498.8" rx="14.9" ry="16.1" fill="#6b9240"/><ellipse cx="637.2" cy="483.2" rx="14.9" ry="15.6" fill="#8bb054"/><path d="M642.0 513.1 L642.0 496.2 M642.0 505.3 L631.2 492.3 M642.0 506.6 L651.6 496.2" stroke="#6b4a33" stroke-width="1.9" fill="none"/><path d="M767.0 497.0 L771.0 497.0 L771.8 568.0 L766.2 568.0Z" fill="#6b4a33"/><ellipse cx="769.0" cy="497.0" rx="31.0" ry="31.0" fill="#70993f"/><ellipse cx="779.9" cy="506.3" rx="19.2" ry="19.2" fill="#628838"/><ellipse cx="762.8" cy="487.7" rx="19.2" ry="18.6" fill="#7ea64a"/><path d="M769.0 523.4 L769.0 503.2 M769.0 514.0 L755.0 498.6 M769.0 515.6 L781.4 503.2" stroke="#6b4a33" stroke-width="2.5" fill="none"/><path d="M858.0 515.0 L862.0 515.0 L862.8 540.0 L857.2 540.0Z" fill="#6b4a33"/><ellipse cx="860.0" cy="515.0" rx="11.0" ry="14.0" fill="#82a650"/><ellipse cx="863.9" cy="519.2" rx="6.8" ry="8.7" fill="#729448"/><ellipse cx="857.8" cy="510.8" rx="6.8" ry="8.4" fill="#90b45c"/><path d="M860.0 526.9 L860.0 517.8 M860.0 522.7 L855.0 515.7 M860.0 523.4 L864.4 517.8" stroke="#6b4a33" stroke-width="1.2" fill="none"/><path d="M499 440 Q505 428 522 431 Q535 424 548 436 Q568 440 575 460 Q590 470 585 495 Q590 518 570 526 Q540 534 499 530Z" fill="#6e983f"/><ellipse cx="521" cy="449" rx="19" ry="17" fill="#7ea84a"/><circle cx="557" cy="498" r="25" fill="#6c963e"/><circle cx="509" cy="492" r="20" fill="#628a3a"/><path d="M517 505 L523 505 L527 612 L512 612Z" fill="#6b4a33"/><path d="M522 540 L546 516 M521 552 L502 528 M524 578 L556 560 M512 570 L499 555" stroke="#6b4a33" stroke-width="2.6"/><ellipse cx="520" cy="612" rx="16" ry="3" fill="#6e9444" opacity="0.6"/><path d="M843 517 L853 508 L863 517Z" fill="#e9874a"/><rect x="843" y="508" width="20" height="9" fill="#ec8a4c"/><rect x="881" y="508" width="16" height="9" fill="#8cc05a"/><rect x="845" y="517" width="2.5" height="25" fill="#4a7fb8"/><rect x="860" y="517" width="2.5" height="25" fill="#4a7fb8"/><rect x="883" y="517" width="2.5" height="25" fill="#4a7fb8"/><rect x="894" y="517" width="2.5" height="25" fill="#4a7fb8"/><rect x="846" y="525" width="14" height="10" fill="#f2ead0"/><circle cx="853" cy="530" r="3.5" fill="#4a88c8"/><rect x="862" y="526" width="21" height="8" fill="#f2c03a"/><rect x="883" y="525" width="12" height="10" fill="#f2ead0"/><circle cx="889" cy="530" r="3.5" fill="#d8553a"/><path d="M820 554 L840 534 L845 537 L826 557Z" fill="#7fc27a"/><path d="M894 534 L912 552 L905 555 L890 538Z" fill="#4a86cc"/><path d="M862 535 L872 554 M868 535 L878 554" stroke="#a06a40" stroke-width="1.2"/><path d="M568 525 L632 525" stroke="#dadada" stroke-width="1.5"/><path d="M572 525 L560 592 M572 525 L582 592 M632 525 L621 592 M632 525 L645 592" stroke="#d78a3a" stroke-width="2.6"/><path d="M581 525 L583 575 M597 525 L596 575 M607 525 L611 571 M620 525 L627 571" stroke="#ececec" stroke-width="0.9"/><circle cx="589.0" cy="557.6" r="2.5" fill="#e8b48a"/><path d="M586.5 557.3 Q589.0 554.4 591.5 557.3Z" fill="#4a2e1c"/><rect x="586.1" y="560.5" width="5.9" height="8.5" rx="1.0" fill="#f5f5f5"/><path d="M586.1 568.6 L591.9 568.6 L592.2 572.5 L585.8 572.5Z" fill="#8a6040"/><path d="M587.0 572.5 L585.8 579.0 M591.0 572.5 L592.2 579.0" stroke="#e8b48a" stroke-width="1.2"/><circle cx="620.0" cy="553.4" r="2.3" fill="#e8b48a"/><path d="M617.7 553.1 Q620.0 550.4 622.3 553.1Z" fill="#4a2e1c"/><rect x="617.3" y="556.1" width="5.4" height="7.8" rx="0.9" fill="#e06a5a"/><path d="M617.3 563.6 L622.7 563.6 L623.0 567.2 L617.0 567.2Z" fill="#5a78b0"/><path d="M618.2 567.2 L617.0 573.2 M621.8 567.2 L623.0 573.2" stroke="#e8b48a" stroke-width="1.1"/><circle cx="652.0" cy="534.7" r="4.2" fill="#e8b48a"/><path d="M647.6 534.2 Q647.8 529.5 652.0 530.0 Q656.7 530.0 656.4 534.2 Q652.0 531.6 647.6 534.2Z" fill="#4a2a1a"/><path d="M646.2 541.5 Q652.0 539.5 657.8 541.5 L657.2 562.5 L646.8 562.5Z" fill="#ec9a3e"/><path d="M646.8 561.5 L657.2 561.5 L660.4 589.9 L656.7 589.9 L652.0 572.0 L647.3 589.9 L643.6 589.9Z" fill="#3a66a8"/><path d="M642.5 589.9 L647.8 589.9 L647.8 592.5 L641.5 592.5Z M656.2 589.9 L661.5 589.9 L662.5 592.5 L656.2 592.5Z" fill="#3a2a22"/><path d="M678 537 L678 576 M713 537 L713 576 M678 539 L713 539 M678 548 L713 548" stroke="#9a6a40" stroke-width="2" fill="none"/><path d="M670 576 L684 541 M721 576 L708 541" stroke="#9a6a40" stroke-width="1.6"/><rect x="720" y="541" width="17" height="18" fill="#4a7fc0" opacity="0.9"/><path d="M721 541 L721 576 M737 541 L737 576 M717 541 L740 541" stroke="#9a6a40" stroke-width="2"/><circle cx="686.0" cy="541.1" r="2.8" fill="#e8b48a"/><path d="M683.1 540.8 Q683.2 537.6 686.0 538.0 Q689.1 538.0 688.9 540.8 Q686.0 539.0 683.1 540.8Z" fill="#6a3a22"/><path d="M682.1 545.7 Q686.0 544.3 689.9 545.7 L689.5 559.7 L682.5 559.7Z" fill="#9a6ac0"/><path d="M682.5 559.0 L689.5 559.0 L691.6 577.9 L689.1 577.9 L686.0 566.0 L682.9 577.9 L680.4 577.9Z" fill="#3a66a8"/><path d="M679.7 577.9 L683.2 577.9 L683.2 579.6 L679.0 579.6Z M688.8 577.9 L692.3 577.9 L693.0 579.6 L688.8 579.6Z" fill="#3a2a22"/><circle cx="704.0" cy="545.0" r="1.9" fill="#e8b48a"/><path d="M702.1 544.8 Q704.0 542.5 705.9 544.8Z" fill="#4a2e1c"/><rect x="701.8" y="547.2" width="4.5" height="6.5" rx="0.8" fill="#e2889a"/><path d="M701.8 553.5 L706.2 553.5 L706.5 556.5 L701.5 556.5Z" fill="#7aa0c8"/><path d="M702.5 556.5 L701.5 561.5 M705.5 556.5 L706.5 561.5" stroke="#e8b48a" stroke-width="0.9"/><circle cx="740.0" cy="546.8" r="1.7" fill="#e8b48a"/><path d="M738.3 546.6 Q740.0 544.5 741.7 546.6Z" fill="#4a2e1c"/><rect x="738.0" y="548.8" width="4.0" height="5.9" rx="0.7" fill="#4a7fc0"/><path d="M738.0 554.5 L742.0 554.5 L742.2 557.1 L737.8 557.1Z" fill="#4a7fc0"/><path d="M738.6 557.1 L737.8 561.6 M741.4 557.1 L742.2 561.6" stroke="#e8b48a" stroke-width="0.8"/><path d="M736 556 L747 551 L782 583 L771 588Z" fill="#ec8b3c"/><path d="M741 556 L747 554 L777 582 L771 585Z" fill="#dfe6f0"/><circle cx="712.0" cy="563.2" r="3.0" fill="#e8b48a"/><path d="M709.0 562.8 Q712.0 559.2 715.0 562.8Z" fill="#4a2e1c"/><path d="M708.8 568.0 L704.8 562.4 M715.2 568.0 L719.2 563.2" stroke="#e8b48a" stroke-width="1.3"/><rect x="708.4" y="566.8" width="7.2" height="10.4" rx="1.2" fill="#ea6d3a"/><path d="M708.4 576.8 L715.6 576.8 L716.0 581.6 L708.0 581.6Z" fill="#4a7fc0"/><path d="M709.6 581.6 L708.0 589.6 M714.4 581.6 L716.0 589.6" stroke="#e8b48a" stroke-width="1.4"/><circle cx="735.0" cy="572.0" r="2.8" fill="#e8b48a"/><path d="M732.1 571.6 Q735.0 568.2 737.9 571.6Z" fill="#4a2e1c"/><path d="M732.0 576.5 L728.2 571.2 M738.0 576.5 L741.8 572.0" stroke="#e8b48a" stroke-width="1.2"/><rect x="731.6" y="575.4" width="6.8" height="9.8" rx="1.1" fill="#e55a5a"/><path d="M731.6 584.8 L738.4 584.8 L738.8 589.2 L731.2 589.2Z" fill="#e55a5a"/><path d="M732.8 589.2 L731.2 596.8 M737.2 589.2 L738.8 596.8" stroke="#e8b48a" stroke-width="1.4"/><path d="M752 600 L798 586 L800 591 L754 606Z" fill="#9a5f33"/><path d="M755 605 L755 618 M772 600 L772 612 M796 590 L796 603" stroke="#2e2e2e" stroke-width="1.6"/><path d="M782 545 L797 541 L797 544 L782 548Z" fill="#8a5a33"/><rect x="567" y="610" width="88" height="5.5" fill="#9a5f33"/><rect x="567" y="617.8" width="88" height="5.5" fill="#9a5f33"/><rect x="567" y="625.6" width="88" height="5.5" fill="#9a5f33"/><rect x="565" y="633.0" width="92" height="5.5" fill="#7d4a26"/><rect x="560" y="637.6" width="102" height="6.0" fill="#a8693a"/><rect x="566.1" y="643.1" width="2.4" height="12.9" fill="#3a3022"/><rect x="653.8" y="643.1" width="2.4" height="12.9" fill="#3a3022"/><rect x="572.2" y="643.1" width="2" height="8.3" fill="#3a3022"/><rect x="647.7" y="643.1" width="2" height="8.3" fill="#3a3022"/><circle cx="593" cy="596" r="5.5" fill="#f2c7a4"/><path d="M588 597 Q593 606 598 597 L598 600 Q593 608 588 600Z" fill="#eeeeee"/><path d="M587.5 594 Q588 589 593 589 Q598 589 598.5 594 L597 592 L589 592Z" fill="#e8e8e8"/><path d="M582 604 Q591 600 600 604 L602 628 L581 628Z" fill="#4a80c2"/><path d="M581 627 L604 627 L607 634 L604 656 L598 656 L597 636 L592 636 L590 656 L584 656 L582 634Z" fill="#8a4a2e"/><circle cx="629" cy="594" r="5.2" fill="#f2c7a4"/><path d="M623.5 593 Q624 586 630 587 Q636 587 634.5 593 L633 590 L625 591Z" fill="#ececec"/><circle cx="632" cy="587" r="2.5" fill="#ececec"/><path d="M614 604 Q627 600 640 605 L641 627 L613 627Z" fill="#ec8a3e"/><path d="M612 615 L604 612" stroke="#ec8a3e" stroke-width="3"/><path d="M614 626 L642 626 L641 641 L615 641Z" fill="#3e3e86"/><path d="M619 641 L619 655 M629 641 L630 655" stroke="#f2c7a4" stroke-width="3"/><path d="M615 656 L623 656 M626 656 L634 655" stroke="#2a2a2a" stroke-width="2"/><path d="M584 656 L592 657 M598 656 L606 657" stroke="#3a2a22" stroke-width="2.4"/><path d="M829 576 Q832 570 839 571 Q848 573 848 582 Q850 590 846 596 L840 592 L836 580Z" fill="#6a3a22"/><circle cx="836" cy="581" r="5" fill="#f0c098"/><path d="M829 590 Q836 587 845 590 L846 615 L828 615Z" fill="#e46a3e"/><path d="M828 614 L846 614 L852 655 L846 657 L838 630 L830 657 L824 656Z" fill="#3a6aaa"/><path d="M822 657 L831 659 M845 658 L853 655" stroke="#3a2a22" stroke-width="2.4"/><rect x="841" y="615" width="10" height="9" rx="2" fill="#8a5a3a"/><path d="M829 600 L826 622" stroke="#f0c098" stroke-width="2.4"/><path d="M825 622 Q812 640 800 650" stroke="#4a3a2a" stroke-width="0.8" fill="none"/><path d="M786 648 Q792 646 806 648 Q809 650 808 655 L806 662 M790 656 L787 662 M800 656 L802 662" stroke="#b57a4a" stroke-width="2" fill="#b57a4a"/><ellipse cx="797" cy="652" rx="10" ry="4.5" fill="#b57a4a"/><circle cx="786" cy="647" r="4" fill="#b57a4a"/><path d="M805 650 L809 643" stroke="#b57a4a" stroke-width="1.5"/><circle cx="816.0" cy="537.8" r="1.6" fill="#8a5a3a"/><path d="M814.3 537.6 Q814.4 535.8 816.0 536.0 Q817.8 536.0 817.7 537.6 Q816.0 536.6 814.3 537.6Z" fill="#2a1a12"/><path d="M813.8 540.4 Q816.0 539.6 818.2 540.4 L818.0 548.4 L814.0 548.4Z" fill="#f5f5f5"/><path d="M814.0 548.0 L818.0 548.0 L819.2 558.8 L817.8 558.8 L816.0 552.0 L814.2 558.8 L812.8 558.8Z" fill="#3a5a8a"/><path d="M812.4 558.8 L814.4 558.8 L814.4 559.8 L812.0 559.8Z M817.6 558.8 L819.6 558.8 L820.0 559.8 L817.6 559.8Z" fill="#3a2a22"/><path d="M878 572 L898 577 L896 580 L876 577Z" fill="#3a5a9a"/><path d="M905 577 L928 580 L928 583 L903 581Z" fill="#3a5a9a"/><circle cx="881" cy="565" r="3" fill="#8a5a3a"/><path d="M877 567 L886 567 L885 577 L876 577Z" fill="#e46a3e"/><circle cx="928" cy="565" r="3" fill="#e8b48a"/><path d="M924 568 L933 568 L932 578 L924 578Z" fill="#f5f5f5"/><rect x="910" y="610" width="96" height="5.5" fill="#9a5f33"/><rect x="910" y="617.8" width="96" height="5.5" fill="#9a5f33"/><rect x="910" y="625.6" width="96" height="5.5" fill="#9a5f33"/><rect x="908" y="633.0" width="100" height="5.5" fill="#7d4a26"/><rect x="903" y="637.6" width="110" height="6.0" fill="#a8693a"/><rect x="909.6" y="643.1" width="2.4" height="12.9" fill="#3a3022"/><rect x="1004.2" y="643.1" width="2.4" height="12.9" fill="#3a3022"/><rect x="916.2" y="643.1" width="2" height="8.3" fill="#3a3022"/><rect x="997.6" y="643.1" width="2" height="8.3" fill="#3a3022"/><path d="M912 600 Q912 588 923 588 Q934 588 934 600 Q934 610 923 610 Q912 610 912 600Z" fill="#1e140e"/><circle cx="923" cy="598" r="5" fill="#6a3e22"/><path d="M913 606 Q922 603 932 606 L933 626 L913 626Z" fill="#f2cc62"/><path d="M915 626 L940 626 L940 632 L936 650 L930 650 L929 633 L922 633 L920 650 L915 650Z" fill="#3e7a8e"/><path d="M924 616 L940 616 L942 627 L925 627Z" fill="#b8bcc6"/><circle cx="959" cy="596" r="5" fill="#a86a40"/><path d="M954 593 Q959 587 964 593Z" fill="#3a2012"/><path d="M948 605 Q959 601 970 605 L971 622 L948 622Z" fill="#2e9a8a"/><path d="M942 626 Q959 620 976 626 L976 634 L942 634Z" fill="#2e4a7a"/><rect x="950" y="613" width="18" height="13" fill="#f2f4f8"/><path d="M984 600 Q985 589 992 589 Q1000 589 1000 600 L1001 612 L985 612Z" fill="#1a120c"/><circle cx="991" cy="598" r="4.8" fill="#6a3e22"/><path d="M985 606 Q994 603 1003 606 L1003 626 L985 626Z" fill="#f2cc62"/><rect x="980" y="614" width="10" height="10" fill="#d85a3a"/><path d="M976 625 L1000 625 L1000 632 L994 652 L988 652 L988 634 L982 634 L980 652 L975 652Z" fill="#3a6aaa"/><rect x="1000" y="626" width="15" height="3" fill="#f2cc62"/><rect x="1000" y="629" width="15" height="3" fill="#e8e8e8"/><rect x="1001" y="632" width="14" height="3" fill="#6aa0c0"/><path d="M913 652 L920 656 M921 651 L928 653 M975 653 L983 655 M984 654 L992 656" stroke="#3a2a22" stroke-width="2.2"/><circle cx="1004" cy="595" r="9" fill="none" stroke="#2e5a4a" stroke-width="1.8"/><circle cx="1025" cy="600" r="9" fill="none" stroke="#2e5a4a" stroke-width="1.8"/><path d="M1004 595 L1012 583 L1025 600 M1012 583 L1022 581 L1025 600 M1004 595 L1016 597" stroke="#3a8a6a" stroke-width="1.6" fill="none"/><circle cx="1016" cy="548" r="4" fill="#e8b48a"/><path d="M1012 546 Q1016 541 1020 546Z" fill="#c8603a"/><path d="M1008 555 L1022 554 L1021 572 L1009 571Z" fill="#e46a3e"/><path d="M1004 556 L1010 556 L1010 566 L1004 566Z" fill="#3a4a5a"/><path d="M1011 571 L1012 590 M1018 571 L1015 592" stroke="#6a4a2a" stroke-width="3"/><path d="M1020 558 L1028 574" stroke="#e8b48a" stroke-width="1.5"/><circle cx="1062.0" cy="544.5" r="3.1" fill="#f0c098"/><path d="M1058.8 544.1 Q1058.9 540.6 1062.0 541.0 Q1065.5 541.0 1065.2 544.1 Q1062.0 542.1 1058.8 544.1Z" fill="#5a2a1a"/><path d="M1057.8 549.4 Q1062.0 547.9 1066.2 549.4 L1065.8 564.8 L1058.2 564.8Z" fill="#d85a3a"/><path d="M1058.2 564.0 L1065.8 564.0 L1068.1 584.7 L1065.5 584.7 L1062.0 571.7 L1058.5 584.7 L1055.9 584.7Z" fill="#3a6aaa"/><path d="M1055.1 584.7 L1058.9 584.7 L1058.9 586.6 L1054.3 586.6Z M1065.1 584.7 L1068.9 584.7 L1069.7 586.6 L1065.1 586.6Z" fill="#3a2a22"/><circle cx="1076.0" cy="541.6" r="3.2" fill="#a86a40"/><path d="M1072.6 541.2 Q1072.8 537.6 1076.0 538.0 Q1079.6 538.0 1079.4 541.2 Q1076.0 539.2 1072.6 541.2Z" fill="#2a1a12"/><path d="M1071.6 546.8 Q1076.0 545.2 1080.4 546.8 L1080.0 562.8 L1072.0 562.8Z" fill="#e6b845"/><path d="M1072.0 562.0 L1080.0 562.0 L1082.4 583.6 L1079.6 583.6 L1076.0 570.0 L1072.4 583.6 L1069.6 583.6Z" fill="#6a4a2a"/><path d="M1068.8 583.6 L1072.8 583.6 L1072.8 585.6 L1068.0 585.6Z M1079.2 583.6 L1083.2 583.6 L1084.0 585.6 L1079.2 585.6Z" fill="#3a2a22"/><circle cx="966.0" cy="534.6" r="1.5" fill="#e8b48a"/><path d="M964.5 534.5 Q964.5 532.8 966.0 533.0 Q967.6 533.0 967.5 534.5 Q966.0 533.5 964.5 534.5Z" fill="#3a2418"/><path d="M964.0 537.0 Q966.0 536.3 968.0 537.0 L967.8 544.4 L964.2 544.4Z" fill="#8ab0d8"/><path d="M964.2 544.0 L967.8 544.0 L968.9 553.9 L967.6 553.9 L966.0 547.7 L964.4 553.9 L963.1 553.9Z" fill="#3a5a8a"/><path d="M962.7 553.9 L964.5 553.9 L964.5 554.8 L962.3 554.8Z M967.5 553.9 L969.3 553.9 L969.7 554.8 L967.5 554.8Z" fill="#3a2a22"/><circle cx="975.0" cy="535.5" r="1.3" fill="#e8b48a"/><path d="M973.6 535.3 Q973.7 533.8 975.0 534.0 Q976.5 534.0 976.4 535.3 Q975.0 534.5 973.6 535.3Z" fill="#3a2418"/><path d="M973.2 537.7 Q975.0 537.0 976.8 537.7 L976.7 544.3 L973.3 544.3Z" fill="#e6b845"/><path d="M973.3 544.0 L976.7 544.0 L977.7 553.0 L976.5 553.0 L975.0 547.3 L973.5 553.0 L972.3 553.0Z" fill="#e8c890"/><path d="M972.0 553.0 L973.7 553.0 L973.7 553.8 L971.7 553.8Z M976.3 553.0 L978.0 553.0 L978.3 553.8 L976.3 553.8Z" fill="#3a2a22"/><circle cx="1040.0" cy="531.0" r="0.9" fill="#e8b48a"/><path d="M1039.0 530.9 Q1039.1 529.9 1040.0 530.0 Q1041.0 530.0 1041.0 530.9 Q1040.0 530.4 1039.0 530.9Z" fill="#3a2418"/><path d="M1038.7 532.6 Q1040.0 532.1 1041.3 532.6 L1041.2 537.2 L1038.8 537.2Z" fill="#a0a0b0"/><path d="M1038.8 537.0 L1041.2 537.0 L1041.9 543.3 L1041.0 543.3 L1040.0 539.3 L1039.0 543.3 L1038.1 543.3Z" fill="#6a6a7a"/><path d="M1037.9 543.3 L1039.1 543.3 L1039.1 543.9 L1037.7 543.9Z M1040.9 543.3 L1042.1 543.3 L1042.3 543.9 L1040.9 543.9Z" fill="#3a2a22"/><path d="M499 672 L499 640 Q510 628 525 635 Q540 628 552 642 Q570 640 578 655 Q588 660 588 672Z" fill="#567e3a"/><path d="M1014 672 Q1016 660 1030 658 Q1040 648 1055 650 Q1068 638 1085 640 Q1096 632 1104 636 L1104 672Z" fill="#567e3a"/><text id="iltxt" x="598" y="426.3" font-family="Liberation Sans" font-weight="bold" font-size="22.4" textLength="406" lengthAdjust="spacingAndGlyphs" fill="#ffffff">«МІСЬКИЙ ПАРК ЯК СУСПІЛЬНЕ БЛАГО»</text></g></svg><!--/ILLUS-->
  <div class="a" style="left:242px;top:749px;width:1100px;height:1px;background:#d8d8da"></div>
  <div class="a" style="left:242px;top:750px;width:1100px;height:36px;background:#ebebed"></div>
  <div class="a pt" style="left:247px;top:756px;font-size:10px;color:#2a2a2a;line-height:12px">Click to add notes</div>
  <div class="a" style="left:47px;top:786px;width:1295px;height:1px;background:#d8d8da"></div>
  <div class="a" style="left:47px;top:787px;width:1295px;height:20px;background:#f4f4f6"></div>
  <div class="a pt" style="left:65px;top:791px;font-size:9.3px;color:#6e6e72;-webkit-text-stroke:0.2px #6e6e72">Slide 11 of 24</div>
  <div class="a pt" style="left:137px;top:791px;font-size:9.3px;color:#6e6e72;-webkit-text-stroke:0.2px #6e6e72">English (Ukraine)</div>
  <svg class="a" style="left:225px;top:789px" width="13" height="13" viewBox="0 0 13 13"><circle cx="5" cy="2" r="1.4" stroke="#666" fill="none" stroke-width="0.9"/><path d="M1 4.5 L9 4.5 M5 4.5 L5 8 L3 12 M5 8 L7 11" stroke="#666" stroke-width="0.9" fill="none"/><circle cx="9.5" cy="9.5" r="3" fill="#555"/></svg>
  <div class="a pt" style="left:241px;top:791px;font-size:9.3px;color:#6e6e72;-webkit-text-stroke:0.2px #6e6e72">Accessibility: Investigate</div>
  <svg class="a" style="left:922px;top:790px" width="12" height="12" viewBox="0 0 12 12"><path d="M1.5 1.5 L10.5 1.5 L10.5 7 L7 10.5 L1.5 10.5Z M10.5 7 L7 7 L7 10.5" stroke="#777" stroke-width="1" fill="none" stroke-linejoin="round"/></svg>
  <div class="a pt" style="left:939px;top:791px;font-size:9px;color:#7a7a7e;-webkit-text-stroke:0.15px #7a7a7e">Notes</div>
  <svg class="a" style="left:979px;top:790px" width="13" height="12" viewBox="0 0 13 12"><path d="M1 1 L12 1 L12 8 L5 8 L2.5 11 L2.5 8 L1 8Z" stroke="#777" stroke-width="1" fill="none" stroke-linejoin="round"/></svg>
  <div class="a pt" style="left:996px;top:791px;font-size:9px;color:#7a7a7e;-webkit-text-stroke:0.15px #7a7a7e">Comments</div>
  <div class="a" style="left:1052px;top:789px;width:22px;height:15px;background:#cfcfd2;border-radius:2px"></div>
  <svg class="a" style="left:1056px;top:791px" width="14" height="11" viewBox="0 0 14 11"><rect x="0.6" y="0.6" width="12.8" height="9.8" rx="1.5" stroke="#444" stroke-width="1.1" fill="none"/><rect x="1" y="1" width="4.5" height="9" fill="#444"/></svg>
  <svg class="a" style="left:1084px;top:790px" width="13" height="13" viewBox="0 0 13 13"><g stroke="#777" stroke-width="1" fill="none"><rect x="0.5" y="0.5" width="5" height="5" rx="1"/><rect x="7.5" y="0.5" width="5" height="5" rx="1"/><rect x="0.5" y="7.5" width="5" height="5" rx="1"/><rect x="7.5" y="7.5" width="5" height="5" rx="1"/></g></svg>
  <svg class="a" style="left:1111px;top:790px" width="13" height="13" viewBox="0 0 13 13"><rect x="0.5" y="0.5" width="12" height="12" rx="1.5" stroke="#777" stroke-width="1" fill="none"/><path d="M6.5 0.5 L6.5 12.5" stroke="#777" stroke-width="1"/></svg>
  <svg class="a" style="left:1138px;top:790px" width="13" height="13" viewBox="0 0 13 13"><rect x="0.5" y="1" width="12" height="8" stroke="#777" stroke-width="1" fill="none"/><path d="M6.5 9 L6.5 12 M3.5 12.3 L9.5 12.3" stroke="#777" stroke-width="1"/></svg>
  <div class="a" style="left:1164px;top:796px;width:4px;height:1px;background:#999"></div>
  <div class="a" style="left:1175px;top:795.5px;width:74px;height:2px;background:#b8b8bc;border-radius:1px"></div>
  <div class="a" style="left:1209px;top:790px;width:12px;height:12px;background:#fff;border-radius:50%;box-shadow:0 0 2px rgba(0,0,0,0.25)"></div>
  <div class="a pt" style="left:1253px;top:790px;font-size:10px;color:#888">+</div>
  <div class="a pt" style="left:1273px;top:791px;font-size:9px;color:#7a7a7e;-webkit-text-stroke:0.15px #7a7a7e">133%</div>
  <svg class="a" style="left:1313px;top:790px" width="12" height="12" viewBox="0 0 12 12"><path d="M0.7 3.5 L0.7 0.7 L3.5 0.7 M0.7 0.7 L3.5 3.5 M8.5 0.7 L11.3 0.7 L11.3 3.5 M11.3 0.7 L8.5 3.5 M0.7 8.5 L0.7 11.3 L3.5 11.3 M0.7 11.3 L3.5 8.5 M11.3 8.5 L11.3 11.3 L8.5 11.3 M11.3 11.3 L8.5 8.5" stroke="#777" stroke-width="1" fill="none"/></svg>
  <!-- title row -->
  <div class="a" style="left:53px;top:66px;width:49px;height:16px;background:#e1e1e3;border-radius:8px"></div>
  <svg class="a" style="left:72px;top:69px" width="15" height="10" viewBox="0 0 15 10"><rect x="0.6" y="0.6" width="10" height="8" stroke="#777" stroke-width="1.1" fill="#d8d8da"/><circle cx="11.5" cy="5" r="1.5" fill="#555"/><path d="M9 9.5 Q11.5 6.5 14 9.5Z" fill="#555"/></svg>
  <div class="a pt" style="left:122px;top:69px;font-size:9px;color:#6c6c70">AutoSave</div>
  <div class="a" style="left:167px;top:69px;width:21px;height:11px;background:#6e6e72;border-radius:6px"></div>
  <div class="a" style="left:168px;top:70px;width:9px;height:9px;background:#fff;border-radius:50%"></div>
  <svg class="a" style="left:196px;top:67px" width="13" height="13" viewBox="0 0 13 13"><path d="M1.5 6 L6.5 1.5 L11.5 6 L11.5 12 L8 12 L8 8.5 L5 8.5 L5 12 L1.5 12Z" stroke="#666" stroke-width="1.1" fill="none"/></svg>
  <svg class="a" style="left:216px;top:67px" width="13" height="13" viewBox="0 0 13 13"><rect x="1" y="1" width="11" height="11" rx="1.5" stroke="#666" stroke-width="1.1" fill="none"/><rect x="3.5" y="1" width="6" height="3.5" stroke="#666" stroke-width="1" fill="none"/><rect x="3" y="7" width="7" height="5" stroke="#666" stroke-width="1" fill="none"/></svg>
  <svg class="a" style="left:237px;top:67px" width="24" height="13" viewBox="0 0 24 13"><path d="M2 4.5 L5.5 1.5 M2 4.5 L5.5 7.5 M2 4.5 L8 4.5 Q12 4.5 12 8 Q12 11.5 7 12.5" stroke="#777" stroke-width="1.1" fill="none"/><path d="M17.5 5.5 L19.5 7.5 L21.5 5.5" stroke="#555" stroke-width="1.1" fill="none"/></svg>
  <svg class="a" style="left:267px;top:67px" width="13" height="13" viewBox="0 0 13 13"><path d="M10.5 3.5 A5 5 0 1 0 11.5 7" stroke="#888" stroke-width="1.1" fill="none"/><path d="M8 3.8 L11 3.8 L11 0.8" stroke="#888" stroke-width="1.1" fill="none"/></svg>
  <svg class="a" style="left:288px;top:72px" width="12" height="4" viewBox="0 0 12 4"><circle cx="1.5" cy="2" r="1.1" fill="#555"/><circle cx="6" cy="2" r="1.1" fill="#555"/><circle cx="10.5" cy="2" r="1.1" fill="#555"/></svg>
  <svg class="a" style="left:616px;top:68px" width="11" height="11" viewBox="0 0 11 11"><rect x="0.5" y="5" width="5" height="5" fill="#e0707c"/><rect x="4" y="1" width="5.5" height="5.5" rx="1" stroke="#e07080" stroke-width="1" fill="#f6d0d4"/></svg>
  <div class="a pt" style="left:630px;top:69px;font-size:9px;color:#333"><b>Free rider-1</b><span style="color:#666"> — Saved to my Mac</span></div>
  <svg class="a" style="left:767px;top:71px" width="7" height="5" viewBox="0 0 7 5"><path d="M1 1 L3.5 3.5 L6 1" stroke="#666" stroke-width="1" fill="none"/></svg>
  <svg class="a" style="left:1132px;top:70px" width="9" height="9" viewBox="0 0 9 9"><circle cx="3.6" cy="3.6" r="2.8" stroke="#777" stroke-width="1" fill="none"/><path d="M5.6 5.6 L8.5 8.5" stroke="#777" stroke-width="1.1"/></svg>
  <div class="a pt" style="left:1145px;top:69px;font-size:9.3px;letter-spacing:0.35px;color:#7a7a7e;-webkit-text-stroke:0.2px #7a7a7e">Search (Cmd + Ctrl + U)</div>
  <!-- tabs -->
  <div class="a pt tab" style="left:55px">Home</div>
  <div class="a pt tab" style="left:101px">Insert</div>
  <div class="a pt tab" style="left:146px">Draw</div>
  <div class="a pt tab" style="left:188px">Design</div>
  <div class="a pt tab" style="left:240px">Transitions</div>
  <div class="a pt tab" style="left:311px">Animations</div>
  <div class="a pt tab" style="left:382px">Slide Show</div>
  <div class="a pt tab" style="left:451px;font-weight:bold;color:#222">Record</div>
  <div class="a" style="left:451px;top:102px;width:34px;height:2px;background:#b8412b;border-radius:1px"></div>
  <div class="a pt tab" style="left:502px">Review</div>
  <div class="a pt tab" style="left:554px">View</div>
  <div class="a" style="left:1114px;top:87px;width:77px;height:17px;background:#fff;border:1px solid #e2e2e4;border-radius:4px"></div>
  <svg class="a" style="left:1120px;top:89px" width="13" height="13" viewBox="0 0 13 13"><path d="M1 1.5 L12 1.5 L12 9 L5.5 9 L3 11.5 L3 9 L1 9Z" stroke="#444" stroke-width="1.1" fill="none" stroke-linejoin="round"/></svg>
  <div class="a pt" style="left:1136px;top:90px;font-size:9.8px;color:#333;-webkit-text-stroke:0.25px #333">Comments</div>
  <div class="a" style="left:1200px;top:87px;width:60px;height:17px;background:#fff;border:1px solid #e2e2e4;border-radius:4px"></div>
  <svg class="a" style="left:1206px;top:89px" width="13" height="13" viewBox="0 0 13 13"><circle cx="6.5" cy="6.5" r="5.5" stroke="#222" stroke-width="1.1" fill="none"/><circle cx="6.5" cy="6.5" r="3.4" fill="#111"/></svg>
  <div class="a pt" style="left:1222px;top:90px;font-size:9.8px;color:#333;-webkit-text-stroke:0.25px #333">Record</div>
  <div class="a" style="left:1268px;top:86px;width:67px;height:18px;background:#c4432a;border-radius:4px"></div>
  <svg class="a" style="left:1275px;top:89px" width="12" height="12" viewBox="0 0 12 12"><path d="M5 2 L1.5 2 L1.5 10.5 L10 10.5 L10 7" stroke="#f3cfc6" stroke-width="1" fill="none"/><path d="M4 8 Q4 4 8.5 4 L8.5 2 L11 4.8 L8.5 7.5 L8.5 5.6 Q5.5 5.6 4 8Z" stroke="#f3cfc6" stroke-width="0.9" fill="none"/></svg>
  <div class="a pt" style="left:1291px;top:90px;font-size:9.8px;color:#fbe9e4;-webkit-text-stroke:0.2px #fbe9e4">Share</div>
  <svg class="a" style="left:1322px;top:92px" width="7" height="5" viewBox="0 0 7 5"><path d="M1 1 L3.5 3.5 L6 1" stroke="#fbe9e4" stroke-width="1" fill="none"/></svg>
  <!-- ribbon -->
  <svg class="a" style="left:57px;top:113px" width="23" height="20" viewBox="0 0 23 20"><rect x="0.8" y="0.8" width="21" height="16" rx="1" stroke="#777" stroke-width="1.3" fill="#f8f8f8"/><rect x="3" y="3" width="16.5" height="11.5" fill="#e8eefa" stroke="#999" stroke-width="0.6"/><text x="4.5" y="10" font-size="7" fill="#9ab" font-family="Liberation Sans">P</text><circle cx="15" cy="9.5" r="2.6" stroke="#2f7dd4" stroke-width="1.3" fill="#cfe0f6"/><path d="M10.5 18 Q10.5 13 15 13 Q19.5 13 19.5 18Z" fill="#2f7dd4"/></svg>
  <div class="a pt rb" style="left:50px;top:138px;width:37px">Cameo</div>
  <div class="a" style="left:92px;top:112px;width:1px;height:46px;background:#e0e0e2"></div>
  <svg class="a" style="left:108px;top:112px" width="25" height="22" viewBox="0 0 25 22"><path d="M1 1 L20 1" stroke="#555" stroke-width="1.3"/><rect x="2" y="1.5" width="17" height="12" stroke="#555" stroke-width="1.2" fill="#fff"/><path d="M7 4 L12 7.3 L7 10.5Z" fill="#4c9a3a"/><path d="M10.5 13.5 L10.5 19.5 M6 20 L15 20" stroke="#555" stroke-width="1.3"/><circle cx="18.5" cy="13" r="5" fill="#fff" stroke="#555" stroke-width="1"/><circle cx="18.5" cy="13" r="3.2" fill="#d43c3c"/></svg>
  <div class="a pt rb" style="left:96px;top:138px;width:47px;line-height:9px">From<br>Beginning</div>
  <svg class="a" style="left:156px;top:112px" width="25" height="22" viewBox="0 0 25 22"><path d="M1 1 L20 1" stroke="#555" stroke-width="1.3"/><rect x="2" y="1.5" width="17" height="12" stroke="#555" stroke-width="1.2" fill="#fff"/><rect x="4.5" y="4" width="5" height="4" fill="#5a8fd6" stroke="#3a6fb6" stroke-width="0.6"/><path d="M11 5 L15 5 M11 7 L14 7" stroke="#c88" stroke-width="0.8"/><path d="M10.5 13.5 L10.5 19.5 M6 20 L15 20" stroke="#555" stroke-width="1.3"/><circle cx="18.5" cy="13" r="5" fill="#fff" stroke="#555" stroke-width="1"/><circle cx="18.5" cy="13" r="3.2" fill="#d43c3c"/></svg>
  <div class="a pt rb" style="left:140px;top:138px;width:57px;line-height:9px">From<br>Current Slide</div>
  <div class="a" style="left:203px;top:112px;width:1px;height:46px;background:#e0e0e2"></div>
  <svg class="a" style="left:214px;top:113px" width="34" height="20" viewBox="0 0 34 20"><rect x="1" y="1" width="20" height="14" stroke="#c8c8cc" stroke-width="1" fill="#f7f7f8"/><path d="M3 3 L3 13 M19 3 L19 13" stroke="#bbb" stroke-dasharray="1 1.5"/><path d="M11 12 L17 19 M17 12 L11 19" stroke="#f0b8c0" stroke-width="1"/><path d="M28 3.5 L29.5 5 L31 3.5" stroke="#bbb" fill="none"/></svg>
  <div class="a pt rb" style="left:207px;top:138px;width:47px;line-height:9px;color:#aaa">Clear<br>Recording</div>
  <svg class="a" style="left:256px;top:111px" width="34" height="22" viewBox="0 0 34 22"><rect x="1" y="3" width="20" height="16" stroke="#ccd" stroke-width="1" fill="#f4f6fa"/><circle cx="13" cy="12" r="3" stroke="#b5c5da" stroke-width="1" fill="none"/><path d="M28 3.5 L29.5 5 L31 3.5" stroke="#bbb" fill="none"/></svg>
  <div class="a pt rb" style="left:252px;top:138px;width:39px;line-height:9px;color:#aaa">Reset to<br>Cameo</div>
  <div class="a" style="left:297px;top:112px;width:1px;height:46px;background:#e0e0e2"></div>
  <svg class="a" style="left:309px;top:111px" width="26" height="26" viewBox="0 0 26 26"><path d="M2.5 2.5 Q2.5 1 4 1 L17 1 Q18.5 1 18.5 2.5 L18.5 21 L4 21 Q2.5 21 2.5 19.5Z" stroke="#555" stroke-width="1.3" fill="#f8f8f8"/><path d="M2.5 18 L18.5 18" stroke="#555" stroke-width="1.1"/><path d="M15.8 14 Q15.8 10.8 19 10.8 Q22.2 10.8 22.2 14 Q22.2 16 19.2 17.3 L19.2 20" stroke="#8fb0d6" stroke-width="1.4" fill="none"/><circle cx="19.2" cy="22.5" r="0.9" fill="#8fb0d6"/></svg>
  <div class="a pt rb" style="left:303px;top:138px;width:30px;line-height:9px;color:#222">Learn<br>More</div>
</div></div>
<div class="a" style="left:1413px;top:104px;width:169px;height:96px;border-radius:7px;background:#41d97c"></div>
<div class="a" style="left:1416px;top:107px;width:163px;height:90px;border-radius:4px;overflow:hidden;background:linear-gradient(90deg,#c9cccd 0%,#d6d8d8 40%,#dcdcdb 70%,#cfc8c0 85%,#d8d6d4 100%)"><div class="a" style="left:10px;top:35px;width:18px;height:35px;background:#b6c0cc;border-radius:6px;filter:blur(3px)"></div><div class="a" style="left:52px;top:28px;width:20px;height:14px;background:#aab4be;filter:blur(3px)"></div><div class="a" style="left:130px;top:0px;width:20px;height:90px;background:#d2b8a0;filter:blur(5px);transform:rotate(-8deg)"></div><div class="a" style="left:50px;top:62px;width:95px;height:40px;background:#2a2e38;border-radius:40px 40px 0 0;filter:blur(1px)"></div><div class="a" style="left:68px;top:22px;width:36px;height:46px;background:#c8958a;border-radius:45%;filter:blur(1.2px)"></div><div class="a" style="left:67px;top:19px;width:38px;height:12px;background:#3a302c;border-radius:18px 18px 4px 4px;filter:blur(1px)"></div><div class="a" style="left:74px;top:40px;width:8px;height:3px;background:#6a4a44;border-radius:50%;filter:blur(0.8px)"></div><div class="a" style="left:90px;top:40px;width:8px;height:3px;background:#6a4a44;border-radius:50%;filter:blur(0.8px)"></div><div class="a" style="left:80px;top:56px;width:12px;height:3px;background:#8a5a54;border-radius:50%;filter:blur(0.8px)"></div></div>
<div class="a" style="left:1418px;top:176px;width:122px;height:20px;background:rgba(38,40,44,0.88);border-radius:5px"></div><div class="a pt" style="left:1422px;top:179px;font-size:13.2px;line-height:14px;color:#f0f0f0">Oleksandr Labenko</div>
<div class="a" style="left:1414px;top:200px;width:167px;height:93px;overflow:hidden;background:linear-gradient(90deg,#d5d5d2,#dcdcd8 60%,#d8d8d4)"><div class="a" style="left:60px;top:68px;width:95px;height:40px;background:#2c2a2a;border-radius:30px 30px 0 0;filter:blur(1px)"></div><div class="a" style="left:40px;top:2px;width:72px;height:58px;background:#c9b88e;border-radius:45% 45% 25% 25%;filter:blur(1.5px)"></div><div class="a" style="left:50px;top:22px;width:54px;height:56px;background:#c9a08e;border-radius:45%;filter:blur(1.2px)"></div><div class="a" style="left:46px;top:6px;width:62px;height:24px;background:#d4c497;border-radius:30px 30px 10px 10px;filter:blur(1.5px)"></div><div class="a" style="left:58px;top:42px;width:11px;height:4px;background:#6a5048;border-radius:50%;filter:blur(1px)"></div><div class="a" style="left:84px;top:42px;width:11px;height:4px;background:#6a5048;border-radius:50%;filter:blur(1px)"></div><div class="a" style="left:70px;top:63px;width:14px;height:3px;background:#9a6a60;border-radius:50%;filter:blur(1px)"></div></div>
<div class="a" style="left:1418px;top:270px;width:124px;height:20px;background:rgba(38,40,44,0.88);border-radius:5px"></div><svg class="a" style="left:1423px;top:273px" width="14" height="14" viewBox="0 0 14 14"><rect x="5" y="1" width="4.5" height="8" rx="2.2" fill="#e0454e"/><path d="M3 6.5 Q3 11 7.2 11 Q11.4 11 11.4 6.5 M7.2 11 L7.2 13 M4.5 13 L10 13" stroke="#e0454e" stroke-width="1.2" fill="none"/><path d="M1.5 13 L12.5 1" stroke="#e0454e" stroke-width="1.5"/></svg><div class="a pt" style="left:1440px;top:273px;font-size:13.2px;line-height:14px;color:#f0f0f0">Лариса Олійник</div>
<div class="a" style="left:1414px;top:293px;width:167px;height:93px;background:#232427"></div>
<div class="a" style="left:1471px;top:299px;width:52px;height:87px;overflow:hidden;background:linear-gradient(180deg,#e6dcb6,#ddd4b0)"><div class="a" style="left:-4px;top:40px;width:60px;height:50px;background:#1c1c20;border-radius:22px 22px 0 0;filter:blur(0.8px)"></div><div class="a" style="left:44px;top:62px;width:8px;height:25px;background:#c89a8a;filter:blur(1px)"></div><div class="a" style="left:20px;top:16px;width:17px;height:23px;background:#dcbca8;border-radius:45%;filter:blur(0.8px)"></div><div class="a" style="left:19px;top:13px;width:19px;height:8px;background:#c8ae84;border-radius:9px 9px 2px 2px;filter:blur(0.8px)"></div></div>
<div class="a" style="left:1418px;top:364px;width:107px;height:20px;background:rgba(38,40,44,0.88);border-radius:5px"></div><svg class="a" style="left:1423px;top:367px" width="14" height="14" viewBox="0 0 14 14"><rect x="5" y="1" width="4.5" height="8" rx="2.2" fill="#e0454e"/><path d="M3 6.5 Q3 11 7.2 11 Q11.4 11 11.4 6.5 M7.2 11 L7.2 13 M4.5 13 L10 13" stroke="#e0454e" stroke-width="1.2" fill="none"/><path d="M1.5 13 L12.5 1" stroke="#e0454e" stroke-width="1.5"/></svg><div class="a pt" style="left:1440px;top:367px;font-size:13.2px;line-height:14px;color:#f0f0f0">Джума Аліса</div>
<div class="a" style="left:1414px;top:386px;width:167px;height:94px;overflow:hidden;background:linear-gradient(90deg,#f4f2f2 0%,#f0ecea 35%,#e2c8ba 55%,#cfa48c 80%,#a87a64 100%)"><div class="a" style="left:88px;top:40px;width:26px;height:9px;background:#9a7a6a;border-radius:50%;filter:blur(3px);opacity:0.8"></div><div class="a" style="left:110px;top:55px;width:25px;height:20px;background:#c8a090;border-radius:50%;filter:blur(4px);opacity:0.7"></div><div class="a" style="left:141px;top:38px;width:24px;height:9px;background:#7a5a4a;border-radius:50%;filter:blur(3px);opacity:0.8"></div></div>
<div class="a" style="left:1418px;top:458px;width:121px;height:20px;background:rgba(38,40,44,0.88);border-radius:5px"></div><svg class="a" style="left:1423px;top:461px" width="14" height="14" viewBox="0 0 14 14"><rect x="5" y="1" width="4.5" height="8" rx="2.2" fill="#e0454e"/><path d="M3 6.5 Q3 11 7.2 11 Q11.4 11 11.4 6.5 M7.2 11 L7.2 13 M4.5 13 L10 13" stroke="#e0454e" stroke-width="1.2" fill="none"/><path d="M1.5 13 L12.5 1" stroke="#e0454e" stroke-width="1.5"/></svg><div class="a pt" style="left:1440px;top:461px;font-size:13.2px;line-height:14px;color:#f0f0f0">Inna Dolzhenko</div>
<div class="a" style="left:1460px;top:489px;width:75px;height:76px;background:#6aa43a;border-radius:9px 9px 0 0"></div>
<div class="a pt" style="left:1460px;top:503px;width:75px;text-align:center;font-size:40px;line-height:46px;color:#f4f8ee">A</div>
<div class="a" style="left:1418px;top:552px;width:140px;height:20px;background:rgba(38,40,44,0.88);border-radius:5px"></div><svg class="a" style="left:1423px;top:555px" width="14" height="14" viewBox="0 0 14 14"><rect x="5" y="1" width="4.5" height="8" rx="2.2" fill="#e0454e"/><path d="M3 6.5 Q3 11 7.2 11 Q11.4 11 11.4 6.5 M7.2 11 L7.2 13 M4.5 13 L10 13" stroke="#e0454e" stroke-width="1.2" fill="none"/><path d="M1.5 13 L12.5 1" stroke="#e0454e" stroke-width="1.5"/></svg><div class="a pt" style="left:1440px;top:555px;font-size:13.2px;line-height:14px;color:#f0f0f0">Andrii Muzychenko</div>
<div class="a" style="left:1460px;top:584px;width:75px;height:74px;overflow:hidden;border-radius:8px;background:linear-gradient(180deg,#6a5e3e 0%,#5a4a34 35%,#4a3e2e 60%,#5a5038 100%)"><div class="a" style="left:2px;top:2px;width:70px;height:14px;background:#9a8a5a;opacity:0.6;filter:blur(3px)"></div><div class="a" style="left:10px;top:10px;width:12px;height:18px;background:#2a2020;filter:blur(2px)"></div><div class="a" style="left:25px;top:14px;width:22px;height:14px;background:#a84848;opacity:0.8;filter:blur(3px)"></div><div class="a" style="left:12px;top:26px;width:25px;height:5px;background:#d8d0c8;opacity:0.7;filter:blur(1.5px)"></div><div class="a" style="left:58px;top:20px;width:17px;height:40px;background:#a07a4a;opacity:0.6;filter:blur(3px)"></div><div class="a" style="left:0px;top:36px;width:10px;height:35px;background:#6a7a4a;opacity:0.5;filter:blur(3px)"></div><div class="a" style="left:14px;top:56px;width:62px;height:24px;background:#8a827a;border-radius:20px 20px 0 0;filter:blur(1px)"></div><div class="a" style="left:28px;top:11px;width:40px;height:55px;background:#2a1a14;border-radius:45% 45% 30% 30%;filter:blur(1.2px)"></div><div class="a" style="left:36px;top:24px;width:26px;height:30px;background:#c89a82;border-radius:45% 45% 48% 48%;filter:blur(1px)"></div><div class="a" style="left:34px;top:16px;width:30px;height:12px;background:#2a1a14;border-radius:50% 50% 20% 40%;filter:blur(1px)"></div></div>
<div class="a" style="left:1418px;top:646px;width:97px;height:20px;background:rgba(38,40,44,0.88);border-radius:5px"></div><svg class="a" style="left:1423px;top:649px" width="14" height="14" viewBox="0 0 14 14"><rect x="5" y="1" width="4.5" height="8" rx="2.2" fill="#e0454e"/><path d="M3 6.5 Q3 11 7.2 11 Q11.4 11 11.4 6.5 M7.2 11 L7.2 13 M4.5 13 L10 13" stroke="#e0454e" stroke-width="1.2" fill="none"/><path d="M1.5 13 L12.5 1" stroke="#e0454e" stroke-width="1.5"/></svg><div class="a pt" style="left:1440px;top:649px;font-size:13.2px;line-height:14px;color:#f0f0f0">Зоя Тітенко</div>
<div class="a pt" style="left:1422px;top:705px;font-size:16.4px;letter-spacing:1.1px;line-height:19px;font-weight:bold;color:#f4f4f4">Новікова Єлиз…</div>
<div class="a" style="left:1418px;top:739px;width:147px;height:20px;background:rgba(38,40,44,0.88);border-radius:5px"></div><svg class="a" style="left:1423px;top:742px" width="14" height="14" viewBox="0 0 14 14"><rect x="5" y="1" width="4.5" height="8" rx="2.2" fill="#e0454e"/><path d="M3 6.5 Q3 11 7.2 11 Q11.4 11 11.4 6.5 M7.2 11 L7.2 13 M4.5 13 L10 13" stroke="#e0454e" stroke-width="1.2" fill="none"/><path d="M1.5 13 L12.5 1" stroke="#e0454e" stroke-width="1.5"/></svg><div class="a pt" style="left:1440px;top:742px;font-size:13.2px;line-height:14px;color:#f0f0f0">Новікова Єлизавета</div>
<div class="a" style="left:1460px;top:762px;width:74px;height:34px;background:#121212;border-radius:5px"></div>
<svg class="a" style="left:1490px;top:774px" width="14" height="9" viewBox="0 0 14 9"><path d="M1.5 1.5 L7 7 L12.5 1.5" stroke="#aaa" stroke-width="1.6" fill="none"/></svg>
<div class="a" style="left:1386px;top:410px;width:4px;height:42px;background:#8a8a8a;border-radius:2px"></div>
<div id="toolbar" class="a"></div>
<svg class="a" style="left:41px;top:816px" width="28" height="28" viewBox="0 0 28 28"><rect x="10" y="1.5" width="8" height="14" rx="4" stroke="#eee" stroke-width="1.6" fill="none"/><path d="M6 10.5 Q6 19.5 14 19.5 Q22 19.5 22 10.5 M14 19.5 L14 25 M9 25.5 L19 25.5" stroke="#eee" stroke-width="1.6" fill="none"/><path d="M2 24 L24 1.5" stroke="#e0245e" stroke-width="2.6"/></svg>
<div class="a pt" style="left:-45px;top:848.5px;width:200px;text-align:center;font-size:12.2px;line-height:14px;font-weight:bold;color:#e8e8e8">Звук</div>
<svg class="a" style="left:83px;top:827px" width="10" height="6" viewBox="0 0 10 6"><path d="M1.5 5 L5 1.5 L8.5 5" stroke="#ddd" stroke-width="1.5" fill="none"/></svg>
<svg class="a" style="left:138px;top:822px" width="27" height="17" viewBox="0 0 27 17"><rect x="1" y="1" width="17" height="15" rx="3" stroke="#eee" stroke-width="1.6" fill="none"/><path d="M18 6.5 L25.5 1.5 L25.5 15.5 L18 10.5" stroke="#eee" stroke-width="1.6" fill="none" stroke-linejoin="round"/></svg>
<div class="a pt" style="left:52px;top:848.5px;width:200px;text-align:center;font-size:12.2px;line-height:14px;font-weight:bold;color:#e8e8e8">Видео</div>
<svg class="a" style="left:185px;top:827px" width="10" height="6" viewBox="0 0 10 6"><path d="M1.5 5 L5 1.5 L8.5 5" stroke="#ddd" stroke-width="1.5" fill="none"/></svg>
<svg class="a" style="left:498px;top:821px" width="21" height="20" viewBox="0 0 21 20"><circle cx="6" cy="4" r="3" stroke="#eee" stroke-width="1.5" fill="none"/><circle cx="14.5" cy="8" r="3" stroke="#eee" stroke-width="1.5" fill="none"/><path d="M1 15 Q1 9.5 6 9.5 Q8 9.5 9 10.5" stroke="#eee" stroke-width="1.5" fill="none"/><rect x="7.5" y="13" width="13" height="6" rx="3" stroke="#eee" stroke-width="1.5" fill="none"/><path d="M1 15 Q1 18.5 5 18.5 L7.5 18.5" stroke="#eee" stroke-width="1.5" fill="none"/></svg>
<div class="a pt" style="left:525px;top:822px;font-size:12px;line-height:14px;font-weight:bold;color:#c8ccd4">14</div>
<div class="a pt" style="left:408px;top:848.5px;width:200px;text-align:center;font-size:12.2px;line-height:14px;font-weight:bold;color:#e8e8e8">Участники</div>
<svg class="a" style="left:558px;top:827px" width="10" height="6" viewBox="0 0 10 6"><path d="M1.5 5 L5 1.5 L8.5 5" stroke="#ddd" stroke-width="1.5" fill="none"/></svg>
<svg class="a" style="left:610px;top:818px" width="25" height="24" viewBox="0 0 25 24"><path d="M8 3.5 Q8 1 11 1 L21 1 Q24 1 24 4 L24 10 Q24 13 21 13" stroke="#eee" stroke-width="1.5" fill="none"/><path d="M4 5 L16 5 Q20 5 20 9 L20 15 Q20 19 16 19 L10 19 L6 23 L6 19 L4 19 Q1 19 1 15 L1 9 Q1 5 4 5Z" stroke="#eee" stroke-width="1.5" fill="none" stroke-linejoin="round"/><circle cx="6.5" cy="12" r="1.1" fill="#eee"/><circle cx="10.5" cy="12" r="1.1" fill="#eee"/><circle cx="14.5" cy="12" r="1.1" fill="#eee"/></svg>
<div class="a pt" style="left:523px;top:848.5px;width:200px;text-align:center;font-size:12.2px;line-height:14px;font-weight:bold;color:#e8e8e8">Чат</div>
<svg class="a" style="left:652px;top:827px" width="10" height="6" viewBox="0 0 10 6"><path d="M1.5 5 L5 1.5 L8.5 5" stroke="#ddd" stroke-width="1.5" fill="none"/></svg>
<svg class="a" style="left:707px;top:817px" width="23" height="26" viewBox="0 0 23 26"><path d="M6 12 L6 4.5 Q6 2.5 7.7 2.5 Q9.4 2.5 9.4 4.5 L9.4 11 L9.4 2.5 Q9.4 0.8 11.2 0.8 Q13 0.8 13 2.5 L13 11 L13 3.5 Q13 1.8 14.7 1.8 Q16.4 1.8 16.4 3.5 L16.4 12 L16.4 6.5 Q16.4 4.8 18.1 4.8 Q19.8 4.8 19.8 6.5 L19.8 15.5 Q19.8 25 12 25 Q7.5 25 5 20.5 L1.5 14 Q0.8 12.5 2.2 11.8 Q3.5 11.2 4.5 12.5 L6 14.5" stroke="#eee" stroke-width="1.5" fill="none" stroke-linejoin="round"/></svg>
<div class="a pt" style="left:619px;top:848.5px;width:200px;text-align:center;font-size:12.2px;line-height:14px;font-weight:bold;color:#e8e8e8">Поднять руку</div>
<svg class="a" style="left:749px;top:827px" width="10" height="6" viewBox="0 0 10 6"><path d="M1.5 5 L5 1.5 L8.5 5" stroke="#ddd" stroke-width="1.5" fill="none"/></svg>
<div class="a" style="left:806px;top:819px;width:26px;height:21px;background:#1ed67a;border-radius:4px"></div>
<svg class="a" style="left:812px;top:822px" width="14" height="15" viewBox="0 0 14 15"><path d="M7 13.5 L7 3 M2 7.5 L7 2 L12 7.5" stroke="#111" stroke-width="2.6" fill="none"/></svg>
<div class="a pt" style="left:719px;top:848.5px;width:200px;text-align:center;font-size:12.2px;line-height:14px;font-weight:bold;color:#e8e8e8">Поделиться</div>
<svg class="a" style="left:905px;top:816px" width="28" height="26" viewBox="0 0 28 26"><defs><linearGradient id="spk" x1="0" y1="0" x2="1" y2="1"><stop offset="0" stop-color="#f4fbff"/><stop offset="1" stop-color="#9fc6d8"/></linearGradient></defs><path d="M12 5 Q13 13 23 14.5 Q13 16 12 25 Q11 16 1 14.5 Q11 13 12 5Z" fill="url(#spk)"/><path d="M22 1 Q22.5 4 25.5 4.5 Q22.5 5 22 8 Q21.5 5 18.5 4.5 Q21.5 4 22 1Z" fill="#dfeff6"/></svg>
<div class="a pt" style="left:819px;top:848.5px;width:200px;text-align:center;font-size:12.2px;line-height:14px;font-weight:bold;color:#e8e8e8">AI Companion</div>
<svg class="a" style="left:1050px;top:817px" width="26" height="26" viewBox="0 0 26 26"><circle cx="13" cy="13" r="11.8" stroke="#eee" stroke-width="1.6" fill="none"/><circle cx="13" cy="7.5" r="1.4" fill="#eee"/><path d="M10.5 11 L13.5 11 L13.5 18.5 M10.5 18.8 L16.5 18.8" stroke="#eee" stroke-width="1.8" fill="none"/></svg>
<div class="a pt" style="left:964px;top:848.5px;width:200px;text-align:center;font-size:12.2px;line-height:14px;font-weight:bold;color:#e8e8e8">Информация о конференции</div>
<svg class="a" style="left:1201px;top:817px" width="26" height="26" viewBox="0 0 26 26"><circle cx="13" cy="13" r="11.8" stroke="#eee" stroke-width="1.6" fill="none"/><circle cx="8" cy="13" r="1.5" fill="#eee"/><circle cx="13" cy="13" r="1.5" fill="#eee"/><circle cx="18" cy="13" r="1.5" fill="#eee"/></svg>
<div class="a pt" style="left:1115px;top:848.5px;width:200px;text-align:center;font-size:12.2px;line-height:14px;font-weight:bold;color:#e8e8e8">Дополнительно</div>
<svg class="a" style="left:1535px;top:816px" width="28" height="27" viewBox="0 0 28 27"><path d="M17 3 L26 1 L26 24 L17 26 Z M17 3 L17 26" stroke="#e0245e" stroke-width="1.6" fill="none" stroke-linejoin="round"/><circle cx="10" cy="5" r="2.6" stroke="#eee" stroke-width="1.4" fill="#000"/><path d="M8 9 L12.5 9 L14 15 L17 16 M9 9.5 L6 14 L3.5 13 M10.5 11 L9.5 17 L13 21 L13 25 M9.5 17 L6 25" stroke="#eee" stroke-width="1.5" fill="none" stroke-linejoin="round"/></svg>
<div class="a pt" style="left:1449px;top:848.5px;width:200px;text-align:center;font-size:12.2px;line-height:14px;font-weight:bold;color:#e8e8e8">Выйти</div>
<div id="taskbar" class="a"></div>
<div class="a" style="left:0;top:867px;width:1600px;height:1px;background:#6a7484"></div>
<svg class="a" style="left:10px;top:876px" width="17" height="17" viewBox="0 0 17 17"><g fill="#f4f4f4"><path d="M0 2 L7.3 1 L7.3 8 L0 8Z"/><path d="M8.2 0.9 L17 0 L17 8 L8.2 8Z"/><path d="M0 9 L7.3 9 L7.3 16 L0 15Z"/><path d="M8.2 9 L17 9 L17 17 L8.2 16.1Z"/></g></svg>
<div class="a" style="left:38px;top:868px;width:268px;height:32px;background:#f0f0f0"></div>
<svg class="a" style="left:50px;top:875px" width="18" height="18" viewBox="0 0 18 18"><circle cx="10.5" cy="7" r="5.5" stroke="#222" stroke-width="1.5" fill="none"/><path d="M6.5 11 L1 16.5" stroke="#222" stroke-width="1.7"/></svg>
<div class="a pt" style="left:79px;top:876px;font-size:15px;line-height:17px;color:#3a3a3a">Пошук</div>
<svg class="a" style="left:244px;top:869px" width="62" height="31" viewBox="0 0 62 31"><path d="M2 31 Q20 14 50 18 Q60 22 58 31Z" fill="#a8b858"/><path d="M8 28 Q25 20 52 23" stroke="#d8d090" stroke-width="2" fill="none"/><path d="M12 26 Q22 12 30 4" stroke="#8a5a4a" stroke-width="1.5" fill="none"/><circle cx="30" cy="12" r="5" fill="#f0b0a8"/><circle cx="40" cy="18" r="5" fill="#f2b8b0"/><circle cx="22" cy="20" r="3" fill="#e8a0a0"/><path d="M14 8 Q18 4 22 6 Q18 9 14 8Z M32 4 Q36 0 40 3 Q36 6 32 4Z" fill="#6aa04a"/></svg>
<svg class="a" style="left:315px;top:875px" width="19" height="18" viewBox="0 0 19 18"><path d="M1 1 L12 1 M1 17 L12 17 M2 3 L2 15 L11 15 L11 3Z" stroke="#e8e8e8" stroke-width="1.4" fill="none"/><path d="M16 1 L16 4 M16 7 L16 11 M16 14 L16 17" stroke="#e8e8e8" stroke-width="1.6"/></svg>
<svg class="a" style="left:353px;top:872px" width="24" height="24" viewBox="0 0 24 24"><rect x="3" y="4" width="18" height="17" rx="3" fill="#e9e9ee"/><rect x="7" y="9" width="4.5" height="4.5" fill="#f25022"/><rect x="12.5" y="9" width="4.5" height="4.5" fill="#7fba00"/><rect x="7" y="14.5" width="4.5" height="4.5" fill="#00a4ef"/><rect x="12.5" y="14.5" width="4.5" height="4.5" fill="#ffb900"/></svg>
<svg class="a" style="left:392px;top:872px" width="24" height="24" viewBox="0 0 24 24"><circle cx="12" cy="12" r="10" fill="#1a8ad4"/><path d="M4 14 Q6 6 14 6 Q21 6 21 12 Q21 15 17 15 L8 15 Q10 19 15 19 Q18 19 20 17 Q18 22 12 22 Q5 22 4 14Z" fill="#37d4a0"/><ellipse cx="13" cy="12" rx="5" ry="3" fill="#1a6ab4"/></svg>
<svg class="a" style="left:430px;top:872px" width="24" height="24" viewBox="0 0 24 24"><ellipse cx="12" cy="12" rx="9" ry="10" fill="#e0182a"/><ellipse cx="12" cy="12" rx="4" ry="7.5" fill="#1f2f3c"/></svg>
<svg class="a" style="left:469px;top:872px" width="24" height="24" viewBox="0 0 24 24"><rect x="6" y="4" width="16" height="14" rx="2" fill="#3a8ae0"/><path d="M6 10 L14 15 L22 10 L22 20 L6 20Z" fill="#70b8f8"/><rect x="2" y="10" width="10" height="10" rx="1.5" fill="#0a5ab8"/><circle cx="7" cy="15" r="2.8" stroke="#fff" stroke-width="1.3" fill="none"/></svg>
<svg class="a" style="left:507px;top:872px" width="24" height="24" viewBox="0 0 24 24"><path d="M2 5 L10 5 L12 7 L22 7 L22 20 L2 20Z" fill="#f2c84a"/><rect x="2" y="9" width="20" height="11" fill="#f8d860"/><rect x="7" y="14" width="10" height="6" fill="#3a8ae0"/></svg>
<svg class="a" style="left:545px;top:872px" width="24" height="24" viewBox="0 0 24 24"><rect x="2" y="3" width="20" height="19" rx="3" fill="#e8232a"/><path d="M5 9 L8 16 L12 10 L16 16 L19 9" stroke="#fff" stroke-width="2" fill="none"/></svg>
<svg class="a" style="left:584px;top:872px" width="24" height="24" viewBox="0 0 24 24"><rect x="9" y="4" width="13" height="14" rx="3" fill="#7b83eb"/><circle cx="17" cy="5" r="3" fill="#7b83eb"/><rect x="2" y="7" width="12" height="12" rx="2" fill="#4b53bc"/><path d="M5 10 L11 10 M8 10 L8 17" stroke="#fff" stroke-width="1.8"/></svg>
<svg class="a" style="left:622px;top:872px" width="24" height="24" viewBox="0 0 24 24"><rect x="2" y="4" width="20" height="17" rx="3" fill="#0a1a2a"/><path d="M5 9 Q5 17 10 17 Q12 17 12 13 Q12 17 15 17 Q19 17 19 12 Q19 8 16 8" stroke="#4a8ae8" stroke-width="2.5" fill="none"/><path d="M9 8 Q12 8 12 12" stroke="#38d0c0" stroke-width="2.5" fill="none"/></svg>
<svg class="a" style="left:660px;top:872px" width="24" height="24" viewBox="0 0 24 24"><circle cx="12" cy="12" r="10" fill="#db4437"/><path d="M12 12 L21 7 A10 10 0 0 1 17 20.5Z" fill="#f4c20d"/><path d="M12 12 L17 20.5 A10 10 0 0 1 2.5 9Z" fill="#0f9d58"/><circle cx="12" cy="12" r="4.5" fill="#fff"/><circle cx="12" cy="12" r="3.5" fill="#4285f4"/></svg>
<svg class="a" style="left:699px;top:872px" width="24" height="24" viewBox="0 0 24 24"><path d="M12 2 Q21 2 21 11 Q21 19 12 19 L10 22 L10 19 Q3 18 3 11 Q3 2 12 2Z" fill="#7360f2"/><path d="M8 7 Q8 14 15 15 L16 13 L14 12 L13 13 Q10 11 10 9 L11 8 L10 6Z" fill="#fff"/></svg>
<svg class="a" style="left:737px;top:872px" width="24" height="24" viewBox="0 0 24 24"><circle cx="12" cy="12" r="10.5" fill="#0b5cff"/><text x="12" y="15.5" font-size="9" font-weight="bold" fill="#fff" text-anchor="middle" font-family="Liberation Sans">zm</text></svg>
<div class="a" style="left:507px;top:898px;width:24px;height:2px;background:#6a88a8"></div>
<div class="a" style="left:584px;top:898px;width:24px;height:2px;background:#6a88a8"></div>
<div class="a" style="left:622px;top:898px;width:24px;height:2px;background:#6a88a8"></div>
<div class="a" style="left:660px;top:898px;width:24px;height:2px;background:#6a88a8"></div>
<div class="a" style="left:699px;top:898px;width:24px;height:2px;background:#6a88a8"></div>
<div class="a" style="left:737px;top:898px;width:24px;height:2px;background:#6a88a8"></div>
<div class="a" style="left:1214px;top:874px;width:22px;height:22px;border-radius:50%;background:radial-gradient(circle at 40% 35%,#ffc430,#f38a0a)"></div>
<div class="a pt" style="left:1246px;top:875px;font-size:15px;line-height:17px;color:#f0f0f0">15°C&nbsp; Sunny</div>
<svg class="a" style="left:1345px;top:879px" width="15" height="9" viewBox="0 0 15 9"><path d="M1 8 L7.5 1.5 L14 8" stroke="#e8e8e8" stroke-width="1.4" fill="none"/></svg>
<svg class="a" style="left:1370px;top:876px" width="16" height="17" viewBox="0 0 16 17"><rect x="1.5" y="4" width="9" height="9" rx="2" stroke="#e8e8e8" stroke-width="1.2" fill="none"/><path d="M10.5 6.5 L14.5 4.5 L14.5 12.5 L10.5 10.5" stroke="#e8e8e8" stroke-width="1.2" fill="none"/><path d="M3 1.5 Q6 0 9 1.5 M3 15.5 Q6 17 9 15.5" stroke="#e8e8e8" stroke-width="1" fill="none"/></svg>
<svg class="a" style="left:1394px;top:879px" width="17" height="10" viewBox="0 0 17 10"><rect x="0.6" y="0.6" width="14" height="8.8" rx="1" stroke="#e8e8e8" stroke-width="1.2" fill="none"/><rect x="2.5" y="2.5" width="6" height="5" fill="#e8e8e8"/><rect x="15" y="3" width="1.6" height="4" fill="#e8e8e8"/></svg>
<svg class="a" style="left:1421px;top:876px" width="16" height="16" viewBox="0 0 16 16"><path d="M1 15 Q1 1 15 1 M4.5 15 Q4.5 4.5 15 4.5 M8 15 Q8 8 15 8" stroke="#c8c8c8" stroke-width="1.3" fill="none"/><circle cx="13" cy="13" r="1.6" fill="#e8e8e8"/></svg>
<svg class="a" style="left:1443px;top:876px" width="19" height="16" viewBox="0 0 19 16"><path d="M1 5.5 L4.5 5.5 L9 1.5 L9 14.5 L4.5 10.5 L1 10.5Z" stroke="#e8e8e8" stroke-width="1.2" fill="none" stroke-linejoin="round"/><path d="M11.5 5 Q13 8 11.5 11 M14 3 Q16.5 8 14 13" stroke="#c8c8c8" stroke-width="1.1" fill="none"/></svg>
<div class="a pt" style="left:1472px;top:877px;font-size:12.2px;line-height:15px;color:#f0f0f0">РУС</div>
<div class="a pt" style="left:1510px;top:877px;font-size:12px;line-height:15px;color:#f0f0f0">15:46</div>
<svg class="a" style="left:1557px;top:875px" width="18" height="18" viewBox="0 0 18 18"><path d="M1 1 L17 1 L17 13 L11 13 L9 16.5 L7 13 L1 13Z" fill="#f2f2f2"/><path d="M4 4.5 L14 4.5 M4 7 L14 7 M4 9.5 L11 9.5" stroke="#1f2f3c" stroke-width="1"/></svg>
<div class="a" style="left:1593px;top:868px;width:1px;height:32px;background:#5a6878"></div>
</body></html>
